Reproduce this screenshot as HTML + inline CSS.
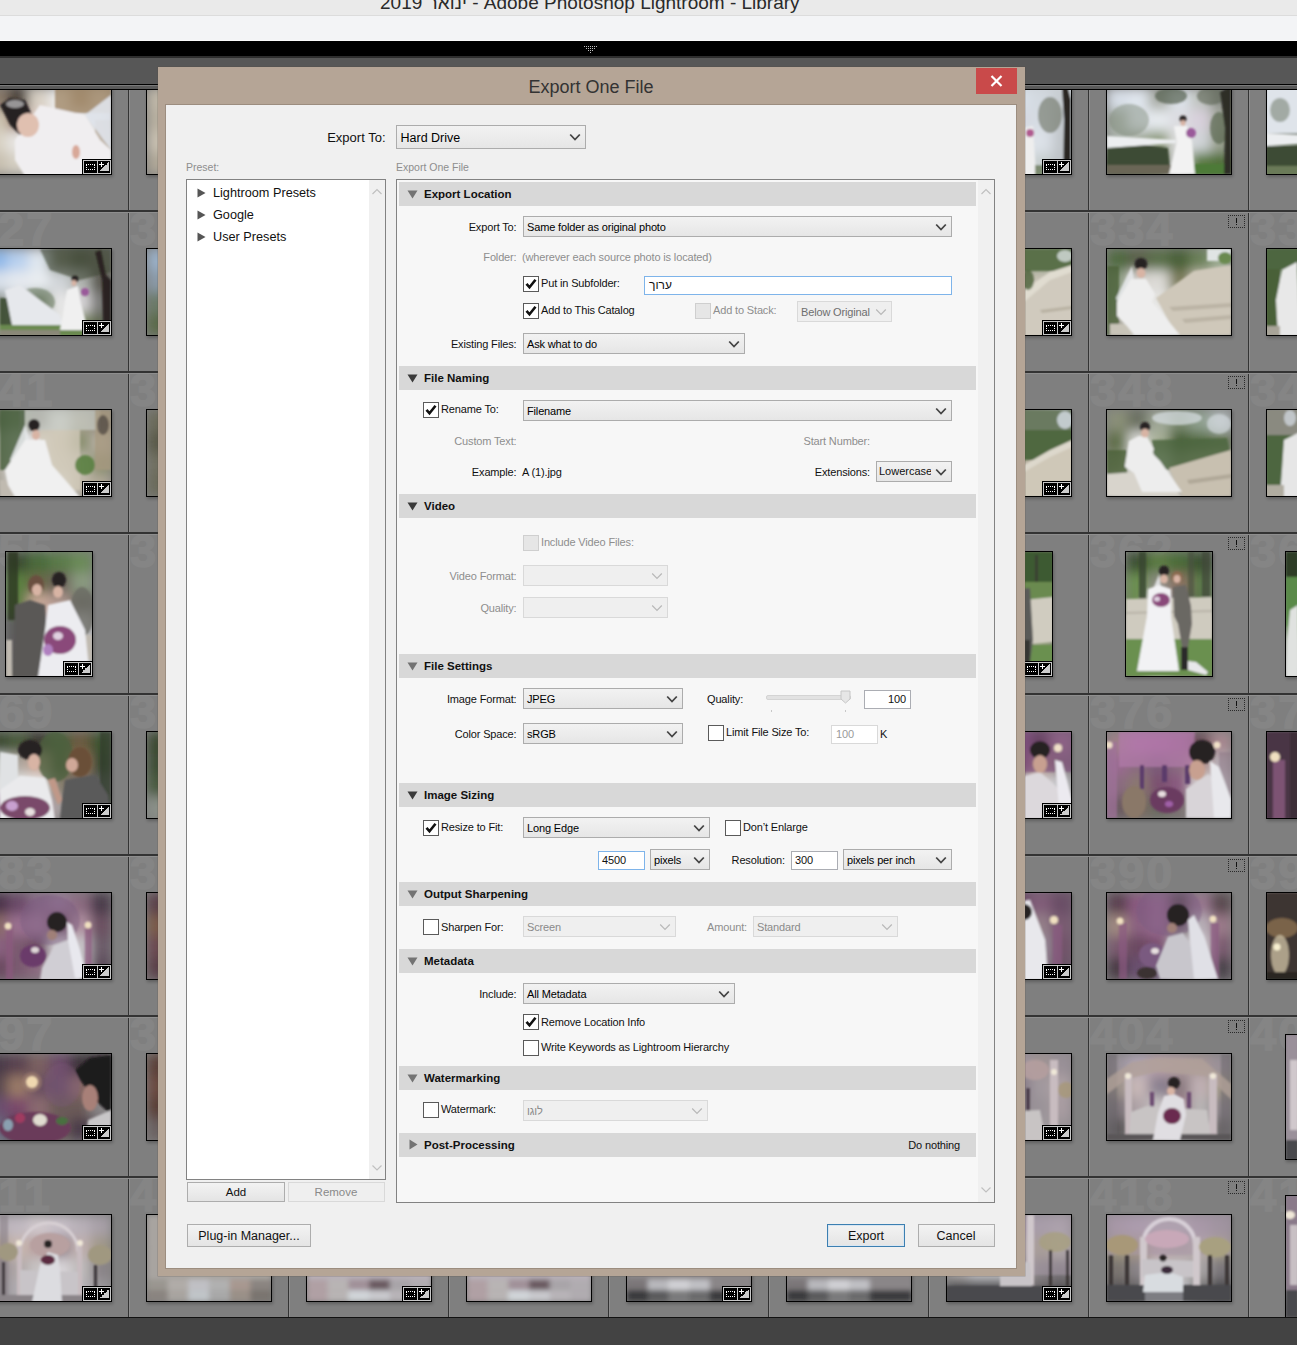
<!DOCTYPE html><html><head><meta charset="utf-8"><style>
*{margin:0;padding:0;box-sizing:border-box}
html,body{width:1297px;height:1345px;overflow:hidden;background:#7f7f7f;font-family:"Liberation Sans", sans-serif}
.a{position:absolute}
.t{white-space:nowrap}
.dd{position:absolute;border:1px solid #acacac;background:linear-gradient(#f2f2f2,#e6e6e6)}
.dd.dis{border-color:#d9d9d9;background:#efefef}
.cb{position:absolute;width:16px;height:16px;border:1px solid #5a5a5a;background:#fff}
.cb.dis{border-color:#cfcfcf;background:#e6e6e6}
.hd{position:absolute;left:399px;width:577px;height:24px;background:#d8d8d8}
.inp{position:absolute;border:1px solid #abadb3;background:#fff}
.btn{position:absolute;border:1px solid #acacac;background:linear-gradient(#f0f0f0,#e5e5e5)}
.ph{position:absolute;border:1px solid #000;overflow:hidden;box-shadow:1px 2px 3px rgba(0,0,0,.25)}
.num{position:absolute;font-weight:700;font-size:47px;line-height:47px;color:#858585;white-space:nowrap;letter-spacing:2px;-webkit-text-stroke:1.5px #858585}
</style></head><body>
<svg width="0" height="0" style="position:absolute"><filter id="pb" x="0" y="0" width="1" height="1"><feGaussianBlur stdDeviation="6" edgeMode="duplicate"/></filter><filter id="pb3" x="0" y="0" width="1" height="1"><feGaussianBlur stdDeviation="2.5" edgeMode="duplicate"/></filter><filter id="pb2" x="-0.1" y="-0.1" width="1.2" height="1.2"><feGaussianBlur stdDeviation="0.9"/></filter></svg>
<div class="num" style="left:-30px;top:44.0px">313</div>
<div class="ph" style="left:-14px;top:87px;width:126px;height:88px"><svg width="124" height="86" style="display:block"><g filter="url(#pb)"><rect x="0.0" y="0.0" width="21.3" height="22.1" fill="#8a7a6a"/><rect x="20.7" y="0.0" width="21.3" height="22.1" fill="#4a4038"/><rect x="41.3" y="0.0" width="21.3" height="22.1" fill="#d8d0c4"/><rect x="62.0" y="0.0" width="21.3" height="22.1" fill="#ececec"/><rect x="82.7" y="0.0" width="21.3" height="22.1" fill="#a89480"/><rect x="103.3" y="0.0" width="21.3" height="22.1" fill="#d8d6d4"/><rect x="0.0" y="21.5" width="21.3" height="22.1" fill="#cfc6b4"/><rect x="20.7" y="21.5" width="21.3" height="22.1" fill="#a08070"/><rect x="41.3" y="21.5" width="21.3" height="22.1" fill="#e0d0c8"/><rect x="62.0" y="21.5" width="21.3" height="22.1" fill="#eeeeee"/><rect x="82.7" y="21.5" width="21.3" height="22.1" fill="#e8e8ea"/><rect x="103.3" y="21.5" width="21.3" height="22.1" fill="#d6d4d0"/><rect x="0.0" y="43.0" width="21.3" height="22.1" fill="#d8d2c4"/><rect x="20.7" y="43.0" width="21.3" height="22.1" fill="#e8e6e4"/><rect x="41.3" y="43.0" width="21.3" height="22.1" fill="#eeeeee"/><rect x="62.0" y="43.0" width="21.3" height="22.1" fill="#f0f0f0"/><rect x="82.7" y="43.0" width="21.3" height="22.1" fill="#eeeeee"/><rect x="103.3" y="43.0" width="21.3" height="22.1" fill="#e6e6e8"/><rect x="0.0" y="64.5" width="21.3" height="22.1" fill="#c8c0b0"/><rect x="20.7" y="64.5" width="21.3" height="22.1" fill="#d6d0c4"/><rect x="41.3" y="64.5" width="21.3" height="22.1" fill="#f0f0f0"/><rect x="62.0" y="64.5" width="21.3" height="22.1" fill="#f2f2f2"/><rect x="82.7" y="64.5" width="21.3" height="22.1" fill="#f0f0f0"/><rect x="103.3" y="64.5" width="21.3" height="22.1" fill="#ececec"/></g><g filter="url(#pb2)" transform="translate(13,-88)"><rect x="55" y="88" width="56" height="25" fill="#a08868" opacity="0.8"/><rect x="95" y="120" width="16" height="30" fill="#a08868" opacity="0.6"/><path d="M85 115 L111 95 L111 150Z" fill="#e0e4ec" opacity="0.9"/><path d="M15 140 L40 105 L85 115 L100 140 L111 150 L111 176 L25 176 L15 160Z" fill="#f0eef0"/><path d="M0 105 L10 98 L25 100 L32 115 L20 135 L10 125Z" fill="#262024"/><ellipse cx="15" cy="104" rx="9" ry="4" fill="#c8c8c8" opacity="0.7"/><ellipse cx="28" cy="125" rx="11" ry="12" fill="#e0c0b0"/><ellipse cx="76" cy="152" rx="4" ry="7" fill="#d8a898"/></g></svg></div>
<div class="a" style="left:82px;top:159px;width:30px;height:16px;background:#000"><div style="position:absolute;left:1px;top:1px;width:28px;height:14px;background:#c8c8c8"></div><div style="position:absolute;left:2px;top:2px;width:13px;height:12px;background:#000"></div><div style="position:absolute;left:16px;top:2px;width:12px;height:12px;background:#000"></div><div style="position:absolute;left:4px;top:5px;width:9px;height:6px;border:1px dotted #fff"></div><div style="position:absolute;left:18px;top:3px;width:9px;height:9px;background:linear-gradient(135deg,transparent 50%,#ccc 50%)"></div><div style="position:absolute;left:17px;top:5px;width:5px;height:1px;background:#fff"></div><div style="position:absolute;left:19px;top:3px;width:1px;height:5px;background:#fff"></div></div>
<div class="num" style="left:130px;top:44.0px">314</div>
<div class="a" style="left:268px;top:54px;width:17px;height:13px;border:1px dotted #2a2a2a"><div style="position:absolute;left:7px;top:2px;width:1px;height:5px;background:#111"></div><div style="position:absolute;left:7px;top:8px;width:1px;height:1px;background:#111"></div></div>
<div class="ph" style="left:146px;top:87px;width:126px;height:88px"><svg width="124" height="86" style="display:block"><g filter="url(#pb)"><rect x="0.0" y="0.0" width="62.6" height="22.1" fill="#c0b8a8"/><rect x="62.0" y="0.0" width="62.6" height="22.1" fill="#c0b8a8"/><rect x="0.0" y="21.5" width="62.6" height="22.1" fill="#b8b0a0"/><rect x="62.0" y="21.5" width="62.6" height="22.1" fill="#b8b0a0"/><rect x="0.0" y="43.0" width="62.6" height="22.1" fill="#c8c0b0"/><rect x="62.0" y="43.0" width="62.6" height="22.1" fill="#c8c0b0"/><rect x="0.0" y="64.5" width="62.6" height="22.1" fill="#b0a898"/><rect x="62.0" y="64.5" width="62.6" height="22.1" fill="#b0a898"/></g></svg></div>
<div class="num" style="left:290px;top:44.0px">315</div>
<div class="num" style="left:450px;top:44.0px">316</div>
<div class="a" style="left:588px;top:54px;width:17px;height:13px;border:1px dotted #2a2a2a"><div style="position:absolute;left:7px;top:2px;width:1px;height:5px;background:#111"></div><div style="position:absolute;left:7px;top:8px;width:1px;height:1px;background:#111"></div></div>
<div class="num" style="left:610px;top:44.0px">317</div>
<div class="num" style="left:770px;top:44.0px">318</div>
<div class="a" style="left:908px;top:54px;width:17px;height:13px;border:1px dotted #2a2a2a"><div style="position:absolute;left:7px;top:2px;width:1px;height:5px;background:#111"></div><div style="position:absolute;left:7px;top:8px;width:1px;height:1px;background:#111"></div></div>
<div class="num" style="left:930px;top:44.0px">319</div>
<div class="ph" style="left:946px;top:87px;width:126px;height:88px"><svg width="124" height="86" style="display:block"><g filter="url(#pb)"><rect x="0.0" y="0.0" width="21.3" height="22.1" fill="#c8d4e4"/><rect x="20.7" y="0.0" width="21.3" height="22.1" fill="#c8d4e4"/><rect x="41.3" y="0.0" width="21.3" height="22.1" fill="#c8d4e4"/><rect x="62.0" y="0.0" width="21.3" height="22.1" fill="#c8d4e4"/><rect x="82.7" y="0.0" width="21.3" height="22.1" fill="#a8b0b8"/><rect x="103.3" y="0.0" width="21.3" height="22.1" fill="#707470"/><rect x="0.0" y="21.5" width="21.3" height="22.1" fill="#b8a8c0"/><rect x="20.7" y="21.5" width="21.3" height="22.1" fill="#b8a8c0"/><rect x="41.3" y="21.5" width="21.3" height="22.1" fill="#b8a8c0"/><rect x="62.0" y="21.5" width="21.3" height="22.1" fill="#b8a8c0"/><rect x="82.7" y="21.5" width="21.3" height="22.1" fill="#b8c0c8"/><rect x="103.3" y="21.5" width="21.3" height="22.1" fill="#5a5a58"/><rect x="0.0" y="43.0" width="21.3" height="22.1" fill="#e0e0e4"/><rect x="20.7" y="43.0" width="21.3" height="22.1" fill="#e0e0e4"/><rect x="41.3" y="43.0" width="21.3" height="22.1" fill="#e0e0e4"/><rect x="62.0" y="43.0" width="21.3" height="22.1" fill="#e0e0e4"/><rect x="82.7" y="43.0" width="21.3" height="22.1" fill="#d8dce4"/><rect x="103.3" y="43.0" width="21.3" height="22.1" fill="#50504a"/><rect x="0.0" y="64.5" width="21.3" height="22.1" fill="#dcdcdc"/><rect x="20.7" y="64.5" width="21.3" height="22.1" fill="#dcdcdc"/><rect x="41.3" y="64.5" width="21.3" height="22.1" fill="#dcdcdc"/><rect x="62.0" y="64.5" width="21.3" height="22.1" fill="#dcdcdc"/><rect x="82.7" y="64.5" width="21.3" height="22.1" fill="#6a7a5a"/><rect x="103.3" y="64.5" width="21.3" height="22.1" fill="#404040"/></g><g filter="url(#pb2)" transform="translate(-947,-88)"><rect x="1000" y="88" width="72" height="88" fill="#dde3ea" opacity="0.8"/><ellipse cx="1050" cy="115" rx="12" ry="18" fill="#6a7060" opacity="0.6"/><path d="M1062 88 L1068 88 L1071 100 L1071 176 L1063 176 L1064 120Z" fill="#2a2824"/><path d="M1024 128 L1033 126 L1036 176 L1024 176Z" fill="#eeeeee"/><ellipse cx="1030" cy="133" rx="4" ry="4" fill="#b05a90"/><rect x="1035" y="165" width="37" height="11" fill="#6a7a5a" opacity="0.8"/></g></svg></div>
<div class="a" style="left:1042px;top:159px;width:30px;height:16px;background:#000"><div style="position:absolute;left:1px;top:1px;width:28px;height:14px;background:#c8c8c8"></div><div style="position:absolute;left:2px;top:2px;width:13px;height:12px;background:#000"></div><div style="position:absolute;left:16px;top:2px;width:12px;height:12px;background:#000"></div><div style="position:absolute;left:4px;top:5px;width:9px;height:6px;border:1px dotted #fff"></div><div style="position:absolute;left:18px;top:3px;width:9px;height:9px;background:linear-gradient(135deg,transparent 50%,#ccc 50%)"></div><div style="position:absolute;left:17px;top:5px;width:5px;height:1px;background:#fff"></div><div style="position:absolute;left:19px;top:3px;width:1px;height:5px;background:#fff"></div></div>
<div class="num" style="left:1090px;top:44.0px">320</div>
<div class="a" style="left:1228px;top:54px;width:17px;height:13px;border:1px dotted #2a2a2a"><div style="position:absolute;left:7px;top:2px;width:1px;height:5px;background:#111"></div><div style="position:absolute;left:7px;top:8px;width:1px;height:1px;background:#111"></div></div>
<div class="ph" style="left:1106px;top:87px;width:126px;height:88px"><svg width="124" height="86" style="display:block"><g filter="url(#pb)"><rect x="0.0" y="0.0" width="21.3" height="22.1" fill="#d8dfe8"/><rect x="20.7" y="0.0" width="21.3" height="22.1" fill="#e0e6ee"/><rect x="41.3" y="0.0" width="21.3" height="22.1" fill="#a8aca4"/><rect x="62.0" y="0.0" width="21.3" height="22.1" fill="#dde3ea"/><rect x="82.7" y="0.0" width="21.3" height="22.1" fill="#c0c4c0"/><rect x="103.3" y="0.0" width="21.3" height="22.1" fill="#8a8e88"/><rect x="0.0" y="21.5" width="21.3" height="22.1" fill="#b0b8b0"/><rect x="20.7" y="21.5" width="21.3" height="22.1" fill="#dfe4ea"/><rect x="41.3" y="21.5" width="21.3" height="22.1" fill="#e6eaee"/><rect x="62.0" y="21.5" width="21.3" height="22.1" fill="#dcdce0"/><rect x="82.7" y="21.5" width="21.3" height="22.1" fill="#d8d0dc"/><rect x="103.3" y="21.5" width="21.3" height="22.1" fill="#a8aca0"/><rect x="0.0" y="43.0" width="21.3" height="22.1" fill="#a8b0a8"/><rect x="20.7" y="43.0" width="21.3" height="22.1" fill="#a0a898"/><rect x="41.3" y="43.0" width="21.3" height="22.1" fill="#8a9878"/><rect x="62.0" y="43.0" width="21.3" height="22.1" fill="#e0e0e0"/><rect x="82.7" y="43.0" width="21.3" height="22.1" fill="#d0d4d8"/><rect x="103.3" y="43.0" width="21.3" height="22.1" fill="#9aa090"/><rect x="0.0" y="64.5" width="21.3" height="22.1" fill="#3e4e34"/><rect x="20.7" y="64.5" width="21.3" height="22.1" fill="#4a5a3a"/><rect x="41.3" y="64.5" width="21.3" height="22.1" fill="#5a6a48"/><rect x="62.0" y="64.5" width="21.3" height="22.1" fill="#d8d8d8"/><rect x="82.7" y="64.5" width="21.3" height="22.1" fill="#5a7a40"/><rect x="103.3" y="64.5" width="21.3" height="22.1" fill="#507038"/></g><g filter="url(#pb2)"><ellipse cx="22" cy="32" rx="20" ry="16" fill="#7a8474" opacity="0.45"/><ellipse cx="64" cy="8" rx="16" ry="8" fill="#55604e" opacity="0.7"/><ellipse cx="104" cy="8" rx="14" ry="9" fill="#5a6454" opacity="0.6"/><ellipse cx="112" cy="40" rx="9" ry="16" fill="#5a6650" opacity="0.7"/><path d="M0 58 L30 56 L61 60 L63 80 L0 80Z" fill="#3e4c34"/><rect x="0" y="77" width="70" height="9" fill="#6a6656"/><rect x="68" y="76" width="56" height="10" fill="#4e7a38"/><path d="M113 4 L120 0 L124 0 L124 86 L117 86 L118 40Z" fill="#2e2e28"/><path d="M0 48 L69 52 L69 55 L0 60Z" fill="#eceef0"/><path d="M67 38 L80 38 L85 54 L88 86 L62 86 L70 54Z" fill="#f2f2f2"/><ellipse cx="76" cy="31" rx="3.5" ry="3.5" fill="#262024"/><ellipse cx="76" cy="35" rx="2.5" ry="3" fill="#d8b4a4"/><ellipse cx="84" cy="45" rx="5" ry="5" fill="#9a5a9a"/></g></svg></div>
<div class="num" style="left:1250px;top:44.0px">321</div>
<div class="ph" style="left:1266px;top:87px;width:126px;height:88px"><svg width="124" height="86" style="display:block"><g filter="url(#pb)"><rect x="0.0" y="0.0" width="62.6" height="22.1" fill="#b8c0c0"/><rect x="62.0" y="0.0" width="62.6" height="22.1" fill="#c8d0d8"/><rect x="0.0" y="21.5" width="62.6" height="22.1" fill="#d8dce0"/><rect x="62.0" y="21.5" width="62.6" height="22.1" fill="#d0d4d8"/><rect x="0.0" y="43.0" width="62.6" height="22.1" fill="#4a5a40"/><rect x="62.0" y="43.0" width="62.6" height="22.1" fill="#506040"/><rect x="0.0" y="64.5" width="62.6" height="22.1" fill="#6a7a58"/><rect x="62.0" y="64.5" width="62.6" height="22.1" fill="#708060"/></g><g filter="url(#pb2)" transform="translate(-1267,-88)"><rect x="1266" y="88" width="40" height="45" fill="#dfe4ea"/><ellipse cx="1280" cy="110" rx="10" ry="12" fill="#7a8474" opacity="0.6"/><path d="M1266 133 L1300 135 L1300 144 L1266 146Z" fill="#eceef0"/><rect x="1266" y="146" width="40" height="20" fill="#3e4c34"/><rect x="1266" y="166" width="40" height="10" fill="#6a7a58"/></g></svg></div>
<div class="a" style="left:1362px;top:159px;width:30px;height:16px;background:#000"><div style="position:absolute;left:1px;top:1px;width:28px;height:14px;background:#c8c8c8"></div><div style="position:absolute;left:2px;top:2px;width:13px;height:12px;background:#000"></div><div style="position:absolute;left:16px;top:2px;width:12px;height:12px;background:#000"></div><div style="position:absolute;left:4px;top:5px;width:9px;height:6px;border:1px dotted #fff"></div><div style="position:absolute;left:18px;top:3px;width:9px;height:9px;background:linear-gradient(135deg,transparent 50%,#ccc 50%)"></div><div style="position:absolute;left:17px;top:5px;width:5px;height:1px;background:#fff"></div><div style="position:absolute;left:19px;top:3px;width:1px;height:5px;background:#fff"></div></div>
<div class="num" style="left:-30px;top:205.0px">327</div>
<div class="ph" style="left:-14px;top:248px;width:126px;height:88px"><svg width="124" height="86" style="display:block"><g filter="url(#pb)"><rect x="0.0" y="0.0" width="21.3" height="22.1" fill="#8fb8e8"/><rect x="20.7" y="0.0" width="21.3" height="22.1" fill="#b8d0ee"/><rect x="41.3" y="0.0" width="21.3" height="22.1" fill="#dfe6ee"/><rect x="62.0" y="0.0" width="21.3" height="22.1" fill="#7a8070"/><rect x="82.7" y="0.0" width="21.3" height="22.1" fill="#5a6050"/><rect x="103.3" y="0.0" width="21.3" height="22.1" fill="#6a6a60"/><rect x="0.0" y="21.5" width="21.3" height="22.1" fill="#d8e0ea"/><rect x="20.7" y="21.5" width="21.3" height="22.1" fill="#e4e8ee"/><rect x="41.3" y="21.5" width="21.3" height="22.1" fill="#e8ecf0"/><rect x="62.0" y="21.5" width="21.3" height="22.1" fill="#d0d4d8"/><rect x="82.7" y="21.5" width="21.3" height="22.1" fill="#b0b4b0"/><rect x="103.3" y="21.5" width="21.3" height="22.1" fill="#5a5850"/><rect x="0.0" y="43.0" width="21.3" height="22.1" fill="#8a9088"/><rect x="20.7" y="43.0" width="21.3" height="22.1" fill="#c8ccd0"/><rect x="41.3" y="43.0" width="21.3" height="22.1" fill="#708068"/><rect x="62.0" y="43.0" width="21.3" height="22.1" fill="#e6e6e6"/><rect x="82.7" y="43.0" width="21.3" height="22.1" fill="#d8d6d8"/><rect x="103.3" y="43.0" width="21.3" height="22.1" fill="#7a7a78"/><rect x="0.0" y="64.5" width="21.3" height="22.1" fill="#8a9a78"/><rect x="20.7" y="64.5" width="21.3" height="22.1" fill="#b8bcb8"/><rect x="41.3" y="64.5" width="21.3" height="22.1" fill="#7a8a68"/><rect x="62.0" y="64.5" width="21.3" height="22.1" fill="#e8e8e8"/><rect x="82.7" y="64.5" width="21.3" height="22.1" fill="#7a8a60"/><rect x="103.3" y="64.5" width="21.3" height="22.1" fill="#5e6650"/></g><g filter="url(#pb2)" transform="translate(13,-249)"><path d="M40 249 L111 249 L111 272 L80 280 L50 270Z" fill="#3a4430" opacity="0.6"/><path d="M95 252 L101 250 L106 275 L111 280 L111 330 L103 330 L102 280Z" fill="#2a2420"/><rect x="0" y="298" width="12" height="30" fill="#3a4a30" opacity="0.9"/><ellipse cx="35" cy="302" rx="20" ry="14" fill="#6a7a60" opacity="0.6"/><rect x="0" y="325" width="111" height="11" fill="#6a8a50"/><rect x="0" y="330" width="60" height="6" fill="#8a8878"/><path d="M5 290 L20 285 L60 315 L62 325 L12 325Z" fill="#e6e8ec"/><path d="M67 290 L78 286 L80 300 L88 330 L60 330 L65 300Z" fill="#f0f0f0"/><ellipse cx="75" cy="279" rx="3.5" ry="3.5" fill="#262024"/><ellipse cx="74" cy="283" rx="2.5" ry="3" fill="#d8b4a4"/><ellipse cx="85" cy="292" rx="4" ry="4" fill="#9a5a9a"/></g></svg></div>
<div class="a" style="left:82px;top:320px;width:30px;height:16px;background:#000"><div style="position:absolute;left:1px;top:1px;width:28px;height:14px;background:#c8c8c8"></div><div style="position:absolute;left:2px;top:2px;width:13px;height:12px;background:#000"></div><div style="position:absolute;left:16px;top:2px;width:12px;height:12px;background:#000"></div><div style="position:absolute;left:4px;top:5px;width:9px;height:6px;border:1px dotted #fff"></div><div style="position:absolute;left:18px;top:3px;width:9px;height:9px;background:linear-gradient(135deg,transparent 50%,#ccc 50%)"></div><div style="position:absolute;left:17px;top:5px;width:5px;height:1px;background:#fff"></div><div style="position:absolute;left:19px;top:3px;width:1px;height:5px;background:#fff"></div></div>
<div class="num" style="left:130px;top:205.0px">328</div>
<div class="a" style="left:268px;top:215px;width:17px;height:13px;border:1px dotted #2a2a2a"><div style="position:absolute;left:7px;top:2px;width:1px;height:5px;background:#111"></div><div style="position:absolute;left:7px;top:8px;width:1px;height:1px;background:#111"></div></div>
<div class="ph" style="left:146px;top:248px;width:126px;height:88px"><svg width="124" height="86" style="display:block"><g filter="url(#pb)"><rect x="0.0" y="0.0" width="62.6" height="22.1" fill="#9ab0c8"/><rect x="62.0" y="0.0" width="62.6" height="22.1" fill="#9ab0c8"/><rect x="0.0" y="21.5" width="62.6" height="22.1" fill="#8a9aa8"/><rect x="62.0" y="21.5" width="62.6" height="22.1" fill="#8a9aa8"/><rect x="0.0" y="43.0" width="62.6" height="22.1" fill="#6a7a68"/><rect x="62.0" y="43.0" width="62.6" height="22.1" fill="#6a7a68"/><rect x="0.0" y="64.5" width="62.6" height="22.1" fill="#5a6a48"/><rect x="62.0" y="64.5" width="62.6" height="22.1" fill="#5a6a48"/></g></svg></div>
<div class="num" style="left:290px;top:205.0px">329</div>
<div class="num" style="left:450px;top:205.0px">330</div>
<div class="a" style="left:588px;top:215px;width:17px;height:13px;border:1px dotted #2a2a2a"><div style="position:absolute;left:7px;top:2px;width:1px;height:5px;background:#111"></div><div style="position:absolute;left:7px;top:8px;width:1px;height:1px;background:#111"></div></div>
<div class="num" style="left:610px;top:205.0px">331</div>
<div class="num" style="left:770px;top:205.0px">332</div>
<div class="a" style="left:908px;top:215px;width:17px;height:13px;border:1px dotted #2a2a2a"><div style="position:absolute;left:7px;top:2px;width:1px;height:5px;background:#111"></div><div style="position:absolute;left:7px;top:8px;width:1px;height:1px;background:#111"></div></div>
<div class="num" style="left:930px;top:205.0px">333</div>
<div class="ph" style="left:946px;top:248px;width:126px;height:88px"><svg width="124" height="86" style="display:block"><g filter="url(#pb)"><rect x="0.0" y="0.0" width="21.3" height="22.1" fill="#6a8060"/><rect x="20.7" y="0.0" width="21.3" height="22.1" fill="#6a8060"/><rect x="41.3" y="0.0" width="21.3" height="22.1" fill="#6a8060"/><rect x="62.0" y="0.0" width="21.3" height="22.1" fill="#6a8060"/><rect x="82.7" y="0.0" width="21.3" height="22.1" fill="#8a9a80"/><rect x="103.3" y="0.0" width="21.3" height="22.1" fill="#7a9068"/><rect x="0.0" y="21.5" width="21.3" height="22.1" fill="#c0bab0"/><rect x="20.7" y="21.5" width="21.3" height="22.1" fill="#c0bab0"/><rect x="41.3" y="21.5" width="21.3" height="22.1" fill="#c0bab0"/><rect x="62.0" y="21.5" width="21.3" height="22.1" fill="#c0bab0"/><rect x="82.7" y="21.5" width="21.3" height="22.1" fill="#c8c2b6"/><rect x="103.3" y="21.5" width="21.3" height="22.1" fill="#cfcabf"/><rect x="0.0" y="43.0" width="21.3" height="22.1" fill="#c0bab0"/><rect x="20.7" y="43.0" width="21.3" height="22.1" fill="#c0bab0"/><rect x="41.3" y="43.0" width="21.3" height="22.1" fill="#c0bab0"/><rect x="62.0" y="43.0" width="21.3" height="22.1" fill="#c0bab0"/><rect x="82.7" y="43.0" width="21.3" height="22.1" fill="#d0cabe"/><rect x="103.3" y="43.0" width="21.3" height="22.1" fill="#ccc6b8"/><rect x="0.0" y="64.5" width="21.3" height="22.1" fill="#c8c4b8"/><rect x="20.7" y="64.5" width="21.3" height="22.1" fill="#c8c4b8"/><rect x="41.3" y="64.5" width="21.3" height="22.1" fill="#c8c4b8"/><rect x="62.0" y="64.5" width="21.3" height="22.1" fill="#c8c4b8"/><rect x="82.7" y="64.5" width="21.3" height="22.1" fill="#c8c4b8"/><rect x="103.3" y="64.5" width="21.3" height="22.1" fill="#c0bcb0"/></g><g filter="url(#pb2)" transform="translate(-947,-249)"><rect x="1000" y="249" width="72" height="22" fill="#5a7048"/><ellipse cx="1065" cy="256" rx="8" ry="6" fill="#d8e0e0" opacity="0.8"/><path d="M1024 300 L1050 280 L1072 270 L1072 336 L1024 336Z" fill="#d0cabe"/><path d="M1024 290 L1050 272 L1072 265 L1072 272 L1050 280 L1024 302Z" fill="#e0dcd0"/><path d="M1040 310 L1072 306 L1072 309 L1042 313Z" fill="#a8a090" opacity="0.6"/><ellipse cx="1028" cy="280" rx="6" ry="10" fill="#4a6038" opacity="0.8"/></g></svg></div>
<div class="a" style="left:1042px;top:320px;width:30px;height:16px;background:#000"><div style="position:absolute;left:1px;top:1px;width:28px;height:14px;background:#c8c8c8"></div><div style="position:absolute;left:2px;top:2px;width:13px;height:12px;background:#000"></div><div style="position:absolute;left:16px;top:2px;width:12px;height:12px;background:#000"></div><div style="position:absolute;left:4px;top:5px;width:9px;height:6px;border:1px dotted #fff"></div><div style="position:absolute;left:18px;top:3px;width:9px;height:9px;background:linear-gradient(135deg,transparent 50%,#ccc 50%)"></div><div style="position:absolute;left:17px;top:5px;width:5px;height:1px;background:#fff"></div><div style="position:absolute;left:19px;top:3px;width:1px;height:5px;background:#fff"></div></div>
<div class="num" style="left:1090px;top:205.0px">334</div>
<div class="a" style="left:1228px;top:215px;width:17px;height:13px;border:1px dotted #2a2a2a"><div style="position:absolute;left:7px;top:2px;width:1px;height:5px;background:#111"></div><div style="position:absolute;left:7px;top:8px;width:1px;height:1px;background:#111"></div></div>
<div class="ph" style="left:1106px;top:248px;width:126px;height:88px"><svg width="124" height="86" style="display:block"><g filter="url(#pb)"><rect x="0.0" y="0.0" width="21.3" height="22.1" fill="#506a40"/><rect x="20.7" y="0.0" width="21.3" height="22.1" fill="#5a6048"/><rect x="41.3" y="0.0" width="21.3" height="22.1" fill="#5a7048"/><rect x="62.0" y="0.0" width="21.3" height="22.1" fill="#4a6038"/><rect x="82.7" y="0.0" width="21.3" height="22.1" fill="#6a8058"/><rect x="103.3" y="0.0" width="21.3" height="22.1" fill="#9aaa90"/><rect x="0.0" y="21.5" width="21.3" height="22.1" fill="#8a9a80"/><rect x="20.7" y="21.5" width="21.3" height="22.1" fill="#d8d4d0"/><rect x="41.3" y="21.5" width="21.3" height="22.1" fill="#dcdad6"/><rect x="62.0" y="21.5" width="21.3" height="22.1" fill="#7a7a58"/><rect x="82.7" y="21.5" width="21.3" height="22.1" fill="#c8c2b4"/><rect x="103.3" y="21.5" width="21.3" height="22.1" fill="#ccc6ba"/><rect x="0.0" y="43.0" width="21.3" height="22.1" fill="#90a088"/><rect x="20.7" y="43.0" width="21.3" height="22.1" fill="#e8e8e6"/><rect x="41.3" y="43.0" width="21.3" height="22.1" fill="#e6e6e4"/><rect x="62.0" y="43.0" width="21.3" height="22.1" fill="#c8c2b4"/><rect x="82.7" y="43.0" width="21.3" height="22.1" fill="#c0bcb0"/><rect x="103.3" y="43.0" width="21.3" height="22.1" fill="#c8c4b8"/><rect x="0.0" y="64.5" width="21.3" height="22.1" fill="#a8a498"/><rect x="20.7" y="64.5" width="21.3" height="22.1" fill="#e8e8e8"/><rect x="41.3" y="64.5" width="21.3" height="22.1" fill="#ececec"/><rect x="62.0" y="64.5" width="21.3" height="22.1" fill="#c8c4b8"/><rect x="82.7" y="64.5" width="21.3" height="22.1" fill="#c8c4ba"/><rect x="103.3" y="64.5" width="21.3" height="22.1" fill="#ccc8bc"/></g><g filter="url(#pb2)"><rect x="100" y="0" width="24" height="12" fill="#e0e4e4"/><ellipse cx="118" cy="9" rx="7" ry="6" fill="#6a8a50"/><path d="M49 49 L87 22 L124 16 L124 86 L70 86Z" fill="#cfc8ba"/><path d="M62 58 L124 54 L124 58 L66 62Z" fill="#a8a090" opacity="0.5"/><path d="M75 70 L124 66 L124 70 L78 74Z" fill="#a8a090" opacity="0.5"/><rect x="0" y="17" width="12" height="69" fill="#4a6038" opacity="0.8"/><rect x="3" y="75" width="24" height="11" fill="#c8c4b8"/><path d="M9 49 L25 17 L27 29 L17 67Z" fill="#e6e8ea" opacity="0.9"/><path d="M10 53 L24 30 L39 30 L48 45 L45 53 L53 62 L73 86 L27 86 L20 77 L10 67Z" fill="#eeeeee"/><ellipse cx="34" cy="15" rx="6.5" ry="6" fill="#262024"/><ellipse cx="34" cy="24" rx="4.5" ry="5" fill="#d8b4a4"/></g></svg></div>
<div class="num" style="left:1250px;top:205.0px">335</div>
<div class="ph" style="left:1266px;top:248px;width:126px;height:88px"><svg width="124" height="86" style="display:block"><g filter="url(#pb)"><rect x="0.0" y="0.0" width="62.6" height="22.1" fill="#4a6038"/><rect x="62.0" y="0.0" width="62.6" height="22.1" fill="#5a7048"/><rect x="0.0" y="21.5" width="62.6" height="22.1" fill="#6a8060"/><rect x="62.0" y="21.5" width="62.6" height="22.1" fill="#c0c4c0"/><rect x="0.0" y="43.0" width="62.6" height="22.1" fill="#7a8a68"/><rect x="62.0" y="43.0" width="62.6" height="22.1" fill="#d8d8d8"/><rect x="0.0" y="64.5" width="62.6" height="22.1" fill="#8a8a78"/><rect x="62.0" y="64.5" width="62.6" height="22.1" fill="#d0d0d0"/></g><g filter="url(#pb2)" transform="translate(-1267,-249)"><rect x="1266" y="249" width="40" height="20" fill="#4e6640"/><rect x="1266" y="269" width="14" height="67" fill="#4a6038"/><path d="M1282 270 L1297 262 L1300 336 L1278 336 L1276 300Z" fill="#e8e8e8"/><rect x="1266" y="326" width="14" height="10" fill="#a8a498"/></g></svg></div>
<div class="a" style="left:1362px;top:320px;width:30px;height:16px;background:#000"><div style="position:absolute;left:1px;top:1px;width:28px;height:14px;background:#c8c8c8"></div><div style="position:absolute;left:2px;top:2px;width:13px;height:12px;background:#000"></div><div style="position:absolute;left:16px;top:2px;width:12px;height:12px;background:#000"></div><div style="position:absolute;left:4px;top:5px;width:9px;height:6px;border:1px dotted #fff"></div><div style="position:absolute;left:18px;top:3px;width:9px;height:9px;background:linear-gradient(135deg,transparent 50%,#ccc 50%)"></div><div style="position:absolute;left:17px;top:5px;width:5px;height:1px;background:#fff"></div><div style="position:absolute;left:19px;top:3px;width:1px;height:5px;background:#fff"></div></div>
<div class="num" style="left:-30px;top:366.0px">341</div>
<div class="ph" style="left:-14px;top:409px;width:126px;height:88px"><svg width="124" height="86" style="display:block"><g filter="url(#pb)"><rect x="0.0" y="0.0" width="21.3" height="22.1" fill="#5a6a50"/><rect x="20.7" y="0.0" width="21.3" height="22.1" fill="#8a9a80"/><rect x="41.3" y="0.0" width="21.3" height="22.1" fill="#8a8480"/><rect x="62.0" y="0.0" width="21.3" height="22.1" fill="#d0d0cc"/><rect x="82.7" y="0.0" width="21.3" height="22.1" fill="#a8a090"/><rect x="103.3" y="0.0" width="21.3" height="22.1" fill="#8a8478"/><rect x="0.0" y="21.5" width="21.3" height="22.1" fill="#a0a898"/><rect x="20.7" y="21.5" width="21.3" height="22.1" fill="#e0dede"/><rect x="41.3" y="21.5" width="21.3" height="22.1" fill="#e8e6e6"/><rect x="62.0" y="21.5" width="21.3" height="22.1" fill="#cfc8b8"/><rect x="82.7" y="21.5" width="21.3" height="22.1" fill="#8a9070"/><rect x="103.3" y="21.5" width="21.3" height="22.1" fill="#b8b0a4"/><rect x="0.0" y="43.0" width="21.3" height="22.1" fill="#b0aca0"/><rect x="20.7" y="43.0" width="21.3" height="22.1" fill="#e6e4e4"/><rect x="41.3" y="43.0" width="21.3" height="22.1" fill="#ececec"/><rect x="62.0" y="43.0" width="21.3" height="22.1" fill="#d6d0c4"/><rect x="82.7" y="43.0" width="21.3" height="22.1" fill="#c0baae"/><rect x="103.3" y="43.0" width="21.3" height="22.1" fill="#8a9070"/><rect x="0.0" y="64.5" width="21.3" height="22.1" fill="#a8a498"/><rect x="20.7" y="64.5" width="21.3" height="22.1" fill="#dcdad8"/><rect x="41.3" y="64.5" width="21.3" height="22.1" fill="#f0f0f0"/><rect x="62.0" y="64.5" width="21.3" height="22.1" fill="#f2f2f2"/><rect x="82.7" y="64.5" width="21.3" height="22.1" fill="#c0b8a8"/><rect x="103.3" y="64.5" width="21.3" height="22.1" fill="#b0a898"/></g><g filter="url(#pb2)" transform="translate(13,-410)"><rect x="20" y="410" width="80" height="20" fill="#c8ccc4" opacity="0.7"/><rect x="0" y="410" width="25" height="60" fill="#4a6040" opacity="0.85"/><rect x="40" y="430" width="40" height="60" fill="#cfc8b8" opacity="0.8"/><rect x="95" y="410" width="16" height="60" fill="#a89880" opacity="0.8"/><ellipse cx="103" cy="425" rx="6" ry="10" fill="#3a3430" opacity="0.6"/><ellipse cx="85" cy="465" rx="10" ry="10" fill="#5a8040" opacity="0.9"/><rect x="0" y="480" width="20" height="17" fill="#c0bab0"/><path d="M10 460 L25 425 L30 440 L20 470Z" fill="#e6e8ea" opacity="0.9"/><path d="M5 470 L25 440 L45 440 L52 465 L80 497 L15 497 L8 485Z" fill="#f0f0f0"/><ellipse cx="34" cy="425" rx="6" ry="6" fill="#262024"/><ellipse cx="36" cy="435" rx="4" ry="5" fill="#d8b4a4"/></g></svg></div>
<div class="a" style="left:82px;top:481px;width:30px;height:16px;background:#000"><div style="position:absolute;left:1px;top:1px;width:28px;height:14px;background:#c8c8c8"></div><div style="position:absolute;left:2px;top:2px;width:13px;height:12px;background:#000"></div><div style="position:absolute;left:16px;top:2px;width:12px;height:12px;background:#000"></div><div style="position:absolute;left:4px;top:5px;width:9px;height:6px;border:1px dotted #fff"></div><div style="position:absolute;left:18px;top:3px;width:9px;height:9px;background:linear-gradient(135deg,transparent 50%,#ccc 50%)"></div><div style="position:absolute;left:17px;top:5px;width:5px;height:1px;background:#fff"></div><div style="position:absolute;left:19px;top:3px;width:1px;height:5px;background:#fff"></div></div>
<div class="num" style="left:130px;top:366.0px">342</div>
<div class="a" style="left:268px;top:376px;width:17px;height:13px;border:1px dotted #2a2a2a"><div style="position:absolute;left:7px;top:2px;width:1px;height:5px;background:#111"></div><div style="position:absolute;left:7px;top:8px;width:1px;height:1px;background:#111"></div></div>
<div class="ph" style="left:146px;top:409px;width:126px;height:88px"><svg width="124" height="86" style="display:block"><g filter="url(#pb)"><rect x="0.0" y="0.0" width="62.6" height="22.1" fill="#6a6a5a"/><rect x="62.0" y="0.0" width="62.6" height="22.1" fill="#6a6a5a"/><rect x="0.0" y="21.5" width="62.6" height="22.1" fill="#5a5a48"/><rect x="62.0" y="21.5" width="62.6" height="22.1" fill="#5a5a48"/><rect x="0.0" y="43.0" width="62.6" height="22.1" fill="#707060"/><rect x="62.0" y="43.0" width="62.6" height="22.1" fill="#707060"/><rect x="0.0" y="64.5" width="62.6" height="22.1" fill="#6a6a5a"/><rect x="62.0" y="64.5" width="62.6" height="22.1" fill="#6a6a5a"/></g></svg></div>
<div class="num" style="left:290px;top:366.0px">343</div>
<div class="num" style="left:450px;top:366.0px">344</div>
<div class="a" style="left:588px;top:376px;width:17px;height:13px;border:1px dotted #2a2a2a"><div style="position:absolute;left:7px;top:2px;width:1px;height:5px;background:#111"></div><div style="position:absolute;left:7px;top:8px;width:1px;height:1px;background:#111"></div></div>
<div class="num" style="left:610px;top:366.0px">345</div>
<div class="num" style="left:770px;top:366.0px">346</div>
<div class="a" style="left:908px;top:376px;width:17px;height:13px;border:1px dotted #2a2a2a"><div style="position:absolute;left:7px;top:2px;width:1px;height:5px;background:#111"></div><div style="position:absolute;left:7px;top:8px;width:1px;height:1px;background:#111"></div></div>
<div class="num" style="left:930px;top:366.0px">347</div>
<div class="ph" style="left:946px;top:409px;width:126px;height:88px"><svg width="124" height="86" style="display:block"><g filter="url(#pb)"><rect x="0.0" y="0.0" width="21.3" height="22.1" fill="#6a7a60"/><rect x="20.7" y="0.0" width="21.3" height="22.1" fill="#6a7a60"/><rect x="41.3" y="0.0" width="21.3" height="22.1" fill="#6a7a60"/><rect x="62.0" y="0.0" width="21.3" height="22.1" fill="#6a7a60"/><rect x="82.7" y="0.0" width="21.3" height="22.1" fill="#8a9a88"/><rect x="103.3" y="0.0" width="21.3" height="22.1" fill="#a8b4b0"/><rect x="0.0" y="21.5" width="21.3" height="22.1" fill="#4a6040"/><rect x="20.7" y="21.5" width="21.3" height="22.1" fill="#4a6040"/><rect x="41.3" y="21.5" width="21.3" height="22.1" fill="#4a6040"/><rect x="62.0" y="21.5" width="21.3" height="22.1" fill="#4a6040"/><rect x="82.7" y="21.5" width="21.3" height="22.1" fill="#5a7048"/><rect x="103.3" y="21.5" width="21.3" height="22.1" fill="#8a9078"/><rect x="0.0" y="43.0" width="21.3" height="22.1" fill="#b8b0a0"/><rect x="20.7" y="43.0" width="21.3" height="22.1" fill="#b8b0a0"/><rect x="41.3" y="43.0" width="21.3" height="22.1" fill="#b8b0a0"/><rect x="62.0" y="43.0" width="21.3" height="22.1" fill="#b8b0a0"/><rect x="82.7" y="43.0" width="21.3" height="22.1" fill="#c0b8a8"/><rect x="103.3" y="43.0" width="21.3" height="22.1" fill="#c8c2b4"/><rect x="0.0" y="64.5" width="21.3" height="22.1" fill="#c0b8a8"/><rect x="20.7" y="64.5" width="21.3" height="22.1" fill="#c0b8a8"/><rect x="41.3" y="64.5" width="21.3" height="22.1" fill="#c0b8a8"/><rect x="62.0" y="64.5" width="21.3" height="22.1" fill="#c0b8a8"/><rect x="82.7" y="64.5" width="21.3" height="22.1" fill="#c0b8a8"/><rect x="103.3" y="64.5" width="21.3" height="22.1" fill="#b8b0a0"/></g><g filter="url(#pb2)" transform="translate(-947,-410)"><rect x="1000" y="410" width="72" height="20" fill="#6a7a60"/><ellipse cx="1065" cy="420" rx="8" ry="9" fill="#d8e0e8" opacity="0.8"/><rect x="1000" y="430" width="72" height="30" fill="#506840"/><path d="M1024 470 L1050 455 L1072 445 L1072 497 L1024 497Z" fill="#cfc8b8"/><path d="M1024 465 L1050 450 L1072 440 L1072 447 L1050 457 L1024 472Z" fill="#ddd8cc"/></g></svg></div>
<div class="a" style="left:1042px;top:481px;width:30px;height:16px;background:#000"><div style="position:absolute;left:1px;top:1px;width:28px;height:14px;background:#c8c8c8"></div><div style="position:absolute;left:2px;top:2px;width:13px;height:12px;background:#000"></div><div style="position:absolute;left:16px;top:2px;width:12px;height:12px;background:#000"></div><div style="position:absolute;left:4px;top:5px;width:9px;height:6px;border:1px dotted #fff"></div><div style="position:absolute;left:18px;top:3px;width:9px;height:9px;background:linear-gradient(135deg,transparent 50%,#ccc 50%)"></div><div style="position:absolute;left:17px;top:5px;width:5px;height:1px;background:#fff"></div><div style="position:absolute;left:19px;top:3px;width:1px;height:5px;background:#fff"></div></div>
<div class="num" style="left:1090px;top:366.0px">348</div>
<div class="a" style="left:1228px;top:376px;width:17px;height:13px;border:1px dotted #2a2a2a"><div style="position:absolute;left:7px;top:2px;width:1px;height:5px;background:#111"></div><div style="position:absolute;left:7px;top:8px;width:1px;height:1px;background:#111"></div></div>
<div class="ph" style="left:1106px;top:409px;width:126px;height:88px"><svg width="124" height="86" style="display:block"><g filter="url(#pb)"><rect x="0.0" y="0.0" width="21.3" height="22.1" fill="#8a9078"/><rect x="20.7" y="0.0" width="21.3" height="22.1" fill="#6a7060"/><rect x="41.3" y="0.0" width="21.3" height="22.1" fill="#a0a898"/><rect x="62.0" y="0.0" width="21.3" height="22.1" fill="#7a8a70"/><rect x="82.7" y="0.0" width="21.3" height="22.1" fill="#90a090"/><rect x="103.3" y="0.0" width="21.3" height="22.1" fill="#b0b8b8"/><rect x="0.0" y="21.5" width="21.3" height="22.1" fill="#607048"/><rect x="20.7" y="21.5" width="21.3" height="22.1" fill="#d8d8d4"/><rect x="41.3" y="21.5" width="21.3" height="22.1" fill="#a8b098"/><rect x="62.0" y="21.5" width="21.3" height="22.1" fill="#4a6038"/><rect x="82.7" y="21.5" width="21.3" height="22.1" fill="#5a7048"/><rect x="103.3" y="21.5" width="21.3" height="22.1" fill="#6a7a58"/><rect x="0.0" y="43.0" width="21.3" height="22.1" fill="#8a9078"/><rect x="20.7" y="43.0" width="21.3" height="22.1" fill="#e0e0de"/><rect x="41.3" y="43.0" width="21.3" height="22.1" fill="#e8e8e8"/><rect x="62.0" y="43.0" width="21.3" height="22.1" fill="#9a9a88"/><rect x="82.7" y="43.0" width="21.3" height="22.1" fill="#b8b0a0"/><rect x="103.3" y="43.0" width="21.3" height="22.1" fill="#c8c0b0"/><rect x="0.0" y="64.5" width="21.3" height="22.1" fill="#d0ccc4"/><rect x="20.7" y="64.5" width="21.3" height="22.1" fill="#d8d4cc"/><rect x="41.3" y="64.5" width="21.3" height="22.1" fill="#ececec"/><rect x="62.0" y="64.5" width="21.3" height="22.1" fill="#c8c4b8"/><rect x="82.7" y="64.5" width="21.3" height="22.1" fill="#c0b8a8"/><rect x="103.3" y="64.5" width="21.3" height="22.1" fill="#c8c0b0"/></g><g filter="url(#pb2)"><ellipse cx="70" cy="8" rx="25" ry="7" fill="#d8e0e4" opacity="0.7"/><ellipse cx="112" cy="14" rx="12" ry="10" fill="#d8e0e4" opacity="0.6"/><path d="M45 30 L120 28 L124 45 L62 60 L48 58Z" fill="#4e6640" opacity="0.85"/><rect x="0" y="40" width="20" height="26" fill="#4a6038" opacity="0.8"/><path d="M62 58 L110 44 L124 40 L124 86 L75 86Z" fill="#c8c0b0"/><path d="M80 70 L124 64 L124 68 L82 74Z" fill="#a09888" opacity="0.6"/><path d="M0 64 L30 62 L55 70 L75 86 L0 86Z" fill="#d8d4cc"/><path d="M18 55 L22 31 L32 26 L40 27 L47 39 L45 43 L53 51 L75 82 L35 82 L27 63 L18 57Z" fill="#ededed"/><ellipse cx="38" cy="17" rx="5" ry="5" fill="#262024"/><ellipse cx="38" cy="23" rx="4" ry="4.5" fill="#d8b4a4"/></g></svg></div>
<div class="num" style="left:1250px;top:366.0px">349</div>
<div class="ph" style="left:1266px;top:409px;width:126px;height:88px"><svg width="124" height="86" style="display:block"><g filter="url(#pb)"><rect x="0.0" y="0.0" width="62.6" height="22.1" fill="#8a8a80"/><rect x="62.0" y="0.0" width="62.6" height="22.1" fill="#a0a8a0"/><rect x="0.0" y="21.5" width="62.6" height="22.1" fill="#6a7a58"/><rect x="62.0" y="21.5" width="62.6" height="22.1" fill="#c8c8c4"/><rect x="0.0" y="43.0" width="62.6" height="22.1" fill="#4a6038"/><rect x="62.0" y="43.0" width="62.6" height="22.1" fill="#d8d8d8"/><rect x="0.0" y="64.5" width="62.6" height="22.1" fill="#a8a498"/><rect x="62.0" y="64.5" width="62.6" height="22.1" fill="#c8c8c4"/></g><g filter="url(#pb2)" transform="translate(-1267,-410)"><rect x="1266" y="410" width="40" height="25" fill="#8a8a80"/><ellipse cx="1290" cy="418" rx="6" ry="8" fill="#d8e0e8" opacity="0.7"/><rect x="1266" y="435" width="40" height="62" fill="#4e6640"/><path d="M1284 440 L1300 432 L1300 497 L1280 497 L1282 470Z" fill="#e6e6e6"/><rect x="1266" y="485" width="18" height="12" fill="#b0aca0"/></g></svg></div>
<div class="a" style="left:1362px;top:481px;width:30px;height:16px;background:#000"><div style="position:absolute;left:1px;top:1px;width:28px;height:14px;background:#c8c8c8"></div><div style="position:absolute;left:2px;top:2px;width:13px;height:12px;background:#000"></div><div style="position:absolute;left:16px;top:2px;width:12px;height:12px;background:#000"></div><div style="position:absolute;left:4px;top:5px;width:9px;height:6px;border:1px dotted #fff"></div><div style="position:absolute;left:18px;top:3px;width:9px;height:9px;background:linear-gradient(135deg,transparent 50%,#ccc 50%)"></div><div style="position:absolute;left:17px;top:5px;width:5px;height:1px;background:#fff"></div><div style="position:absolute;left:19px;top:3px;width:1px;height:5px;background:#fff"></div></div>
<div class="num" style="left:-30px;top:527.0px">355</div>
<div class="ph" style="left:5px;top:551px;width:88px;height:126px"><svg width="86" height="124" style="display:block"><g filter="url(#pb)"><rect x="0.0" y="0.0" width="22.1" height="21.3" fill="#3a4a30"/><rect x="21.5" y="0.0" width="22.1" height="21.3" fill="#4a6a3a"/><rect x="43.0" y="0.0" width="22.1" height="21.3" fill="#5a7a48"/><rect x="64.5" y="0.0" width="22.1" height="21.3" fill="#6a8a58"/><rect x="0.0" y="20.7" width="22.1" height="21.3" fill="#5a8040"/><rect x="21.5" y="20.7" width="22.1" height="21.3" fill="#6a6a48"/><rect x="43.0" y="20.7" width="22.1" height="21.3" fill="#6a6058"/><rect x="64.5" y="20.7" width="22.1" height="21.3" fill="#8a9a80"/><rect x="0.0" y="41.3" width="22.1" height="21.3" fill="#5a7a40"/><rect x="21.5" y="41.3" width="22.1" height="21.3" fill="#c8a898"/><rect x="43.0" y="41.3" width="22.1" height="21.3" fill="#b09890"/><rect x="64.5" y="41.3" width="22.1" height="21.3" fill="#6a6a60"/><rect x="0.0" y="62.0" width="22.1" height="21.3" fill="#5a5a58"/><rect x="21.5" y="62.0" width="22.1" height="21.3" fill="#6a6866"/><rect x="43.0" y="62.0" width="22.1" height="21.3" fill="#c8b8c8"/><rect x="64.5" y="62.0" width="22.1" height="21.3" fill="#d8d8dc"/><rect x="0.0" y="82.7" width="22.1" height="21.3" fill="#5a5858"/><rect x="21.5" y="82.7" width="22.1" height="21.3" fill="#8a6080"/><rect x="43.0" y="82.7" width="22.1" height="21.3" fill="#a07aa0"/><rect x="64.5" y="82.7" width="22.1" height="21.3" fill="#c8c8c8"/><rect x="0.0" y="103.3" width="22.1" height="21.3" fill="#585858"/><rect x="21.5" y="103.3" width="22.1" height="21.3" fill="#7a6a7a"/><rect x="43.0" y="103.3" width="22.1" height="21.3" fill="#e0e0e0"/><rect x="64.5" y="103.3" width="22.1" height="21.3" fill="#d8d8d8"/></g><g filter="url(#pb2)" transform="translate(-6,-552)"><rect x="8" y="552" width="10" height="68" fill="#2a3a20" opacity="0.8"/><ellipse cx="82" cy="612" rx="12" ry="25" fill="#6a6a64" opacity="0.8"/><rect x="6" y="640" width="6" height="37" fill="#c0bab0"/><rect x="82" y="635" width="10" height="25" fill="#c0bab0"/><path d="M15 605 L30 600 L45 605 L47 640 L42 677 L12 677 L15 640Z" fill="#5a5856"/><ellipse cx="36" cy="585" rx="8" ry="10" fill="#6a5040"/><ellipse cx="37" cy="590" rx="5" ry="6" fill="#d8b4a4"/><path d="M48 605 L70 600 L85 630 L90 677 L38 677 L45 630Z" fill="#ececf0"/><ellipse cx="59" cy="580" rx="7" ry="8" fill="#262024"/><ellipse cx="58" cy="592" rx="5" ry="6" fill="#d8b4a4"/><ellipse cx="60" cy="640" rx="16" ry="14" fill="#8a4a7a"/><ellipse cx="58" cy="636" rx="5" ry="4" fill="#e0d0e0"/><ellipse cx="48" cy="650" rx="5" ry="6" fill="#b080c0"/></g></svg></div>
<div class="a" style="left:63px;top:661px;width:30px;height:16px;background:#000"><div style="position:absolute;left:1px;top:1px;width:28px;height:14px;background:#c8c8c8"></div><div style="position:absolute;left:2px;top:2px;width:13px;height:12px;background:#000"></div><div style="position:absolute;left:16px;top:2px;width:12px;height:12px;background:#000"></div><div style="position:absolute;left:4px;top:5px;width:9px;height:6px;border:1px dotted #fff"></div><div style="position:absolute;left:18px;top:3px;width:9px;height:9px;background:linear-gradient(135deg,transparent 50%,#ccc 50%)"></div><div style="position:absolute;left:17px;top:5px;width:5px;height:1px;background:#fff"></div><div style="position:absolute;left:19px;top:3px;width:1px;height:5px;background:#fff"></div></div>
<div class="num" style="left:130px;top:527.0px">356</div>
<div class="a" style="left:268px;top:537px;width:17px;height:13px;border:1px dotted #2a2a2a"><div style="position:absolute;left:7px;top:2px;width:1px;height:5px;background:#111"></div><div style="position:absolute;left:7px;top:8px;width:1px;height:1px;background:#111"></div></div>
<div class="num" style="left:290px;top:527.0px">357</div>
<div class="num" style="left:450px;top:527.0px">358</div>
<div class="a" style="left:588px;top:537px;width:17px;height:13px;border:1px dotted #2a2a2a"><div style="position:absolute;left:7px;top:2px;width:1px;height:5px;background:#111"></div><div style="position:absolute;left:7px;top:8px;width:1px;height:1px;background:#111"></div></div>
<div class="num" style="left:610px;top:527.0px">359</div>
<div class="num" style="left:770px;top:527.0px">360</div>
<div class="a" style="left:908px;top:537px;width:17px;height:13px;border:1px dotted #2a2a2a"><div style="position:absolute;left:7px;top:2px;width:1px;height:5px;background:#111"></div><div style="position:absolute;left:7px;top:8px;width:1px;height:1px;background:#111"></div></div>
<div class="num" style="left:930px;top:527.0px">361</div>
<div class="ph" style="left:965px;top:551px;width:88px;height:126px"><svg width="86" height="124" style="display:block"><g filter="url(#pb)"><rect x="0.0" y="0.0" width="22.1" height="21.3" fill="#4a6a38"/><rect x="21.5" y="0.0" width="22.1" height="21.3" fill="#4a6a38"/><rect x="43.0" y="0.0" width="22.1" height="21.3" fill="#4a6a38"/><rect x="64.5" y="0.0" width="22.1" height="21.3" fill="#5a6a48"/><rect x="0.0" y="20.7" width="22.1" height="21.3" fill="#6a8a50"/><rect x="21.5" y="20.7" width="22.1" height="21.3" fill="#6a8a50"/><rect x="43.0" y="20.7" width="22.1" height="21.3" fill="#6a8a50"/><rect x="64.5" y="20.7" width="22.1" height="21.3" fill="#6a7a58"/><rect x="0.0" y="41.3" width="22.1" height="21.3" fill="#707068"/><rect x="21.5" y="41.3" width="22.1" height="21.3" fill="#707068"/><rect x="43.0" y="41.3" width="22.1" height="21.3" fill="#707068"/><rect x="64.5" y="41.3" width="22.1" height="21.3" fill="#8a9070"/><rect x="0.0" y="62.0" width="22.1" height="21.3" fill="#606060"/><rect x="21.5" y="62.0" width="22.1" height="21.3" fill="#606060"/><rect x="43.0" y="62.0" width="22.1" height="21.3" fill="#606060"/><rect x="64.5" y="62.0" width="22.1" height="21.3" fill="#c0bab0"/><rect x="0.0" y="82.7" width="22.1" height="21.3" fill="#404040"/><rect x="21.5" y="82.7" width="22.1" height="21.3" fill="#404040"/><rect x="43.0" y="82.7" width="22.1" height="21.3" fill="#404040"/><rect x="64.5" y="82.7" width="22.1" height="21.3" fill="#8a9a70"/><rect x="0.0" y="103.3" width="22.1" height="21.3" fill="#6a8a48"/><rect x="21.5" y="103.3" width="22.1" height="21.3" fill="#6a8a48"/><rect x="43.0" y="103.3" width="22.1" height="21.3" fill="#6a8a48"/><rect x="64.5" y="103.3" width="22.1" height="21.3" fill="#6a8a48"/></g><g filter="url(#pb2)" transform="translate(-966,-552)"><rect x="966" y="552" width="87" height="30" fill="#3e5a30"/><rect x="1035" y="555" width="3" height="45" fill="#3a4030"/><rect x="966" y="582" width="87" height="20" fill="#6a8a50"/><path d="M1024 600 L1053 597 L1053 642 L1024 645Z" fill="#d0ccc0"/><rect x="966" y="645" width="87" height="32" fill="#6a9050"/><path d="M1000 590 L1030 588 L1033 640 L1028 677 L1000 677Z" fill="#5a5a58"/><rect x="1024" y="640" width="6" height="37" fill="#2a2a2a" opacity="0.8"/></g></svg></div>
<div class="a" style="left:1023px;top:661px;width:30px;height:16px;background:#000"><div style="position:absolute;left:1px;top:1px;width:28px;height:14px;background:#c8c8c8"></div><div style="position:absolute;left:2px;top:2px;width:13px;height:12px;background:#000"></div><div style="position:absolute;left:16px;top:2px;width:12px;height:12px;background:#000"></div><div style="position:absolute;left:4px;top:5px;width:9px;height:6px;border:1px dotted #fff"></div><div style="position:absolute;left:18px;top:3px;width:9px;height:9px;background:linear-gradient(135deg,transparent 50%,#ccc 50%)"></div><div style="position:absolute;left:17px;top:5px;width:5px;height:1px;background:#fff"></div><div style="position:absolute;left:19px;top:3px;width:1px;height:5px;background:#fff"></div></div>
<div class="num" style="left:1090px;top:527.0px">362</div>
<div class="a" style="left:1228px;top:537px;width:17px;height:13px;border:1px dotted #2a2a2a"><div style="position:absolute;left:7px;top:2px;width:1px;height:5px;background:#111"></div><div style="position:absolute;left:7px;top:8px;width:1px;height:1px;background:#111"></div></div>
<div class="ph" style="left:1125px;top:551px;width:88px;height:126px"><svg width="86" height="124" style="display:block"><g filter="url(#pb)"><rect x="0.0" y="0.0" width="22.1" height="21.3" fill="#3a5030"/><rect x="21.5" y="0.0" width="22.1" height="21.3" fill="#5a7a40"/><rect x="43.0" y="0.0" width="22.1" height="21.3" fill="#4a6a38"/><rect x="64.5" y="0.0" width="22.1" height="21.3" fill="#3a5030"/><rect x="0.0" y="20.7" width="22.1" height="21.3" fill="#6a9050"/><rect x="21.5" y="20.7" width="22.1" height="21.3" fill="#8a8a80"/><rect x="43.0" y="20.7" width="22.1" height="21.3" fill="#8a7060"/><rect x="64.5" y="20.7" width="22.1" height="21.3" fill="#5a7a48"/><rect x="0.0" y="41.3" width="22.1" height="21.3" fill="#6a8a50"/><rect x="21.5" y="41.3" width="22.1" height="21.3" fill="#c8b8c8"/><rect x="43.0" y="41.3" width="22.1" height="21.3" fill="#707068"/><rect x="64.5" y="41.3" width="22.1" height="21.3" fill="#5a7048"/><rect x="0.0" y="62.0" width="22.1" height="21.3" fill="#c0bab0"/><rect x="21.5" y="62.0" width="22.1" height="21.3" fill="#e8e8e8"/><rect x="43.0" y="62.0" width="22.1" height="21.3" fill="#6a6a68"/><rect x="64.5" y="62.0" width="22.1" height="21.3" fill="#c0baae"/><rect x="0.0" y="82.7" width="22.1" height="21.3" fill="#8aa060"/><rect x="21.5" y="82.7" width="22.1" height="21.3" fill="#ececec"/><rect x="43.0" y="82.7" width="22.1" height="21.3" fill="#7a7870"/><rect x="64.5" y="82.7" width="22.1" height="21.3" fill="#7a9a58"/><rect x="0.0" y="103.3" width="22.1" height="21.3" fill="#6a8a48"/><rect x="21.5" y="103.3" width="22.1" height="21.3" fill="#e6e6e6"/><rect x="43.0" y="103.3" width="22.1" height="21.3" fill="#8a8a80"/><rect x="64.5" y="103.3" width="22.1" height="21.3" fill="#6a8a48"/></g><g filter="url(#pb2)"><rect x="13" y="0" width="7" height="47" fill="#3a4430" opacity="0.8"/><rect x="62" y="0" width="6" height="48" fill="#4a5040" opacity="0.6"/><rect x="76" y="0" width="8" height="50" fill="#3e4636" opacity="0.7"/><path d="M0 47 L86 45 L86 87 L0 87Z" fill="#cfcbbf"/><path d="M0 60 L86 58 L86 60 L0 62Z" fill="#a8a498" opacity="0.6"/><rect x="0" y="87" width="86" height="37" fill="#6a9050"/><path d="M24 45 L33 22 L35 35 L28 58Z" fill="#e4e6e8" opacity="0.9"/><path d="M22 37 L33 33 L45 37 L45 64 L53 119 L11 119 L21 64Z" fill="#f2f2f4"/><ellipse cx="38" cy="19" rx="5" ry="5.5" fill="#262024"/><ellipse cx="38" cy="27" rx="4" ry="4.5" fill="#d8b4a4"/><ellipse cx="35" cy="48" rx="9" ry="7" fill="#8a4a7a"/><ellipse cx="31" cy="47" rx="3" ry="2.5" fill="#e0d0e0"/><path d="M47 35 L60 33 L65 54 L66 72 L62 95 L56 95 L52 72 L48 64Z" fill="#6a6864"/><ellipse cx="51" cy="25" rx="5.5" ry="6" fill="#8a6a50"/><ellipse cx="51" cy="27" rx="3.5" ry="4" fill="#d8b4a4"/><rect x="55" y="95" width="7" height="23" fill="#2a2a2a"/><path d="M62 109 L70 110 L82 120 L80 123 L62 118Z" fill="#e8e8ea"/></g></svg></div>
<div class="num" style="left:1250px;top:527.0px">363</div>
<div class="ph" style="left:1285px;top:551px;width:88px;height:126px"><svg width="86" height="124" style="display:block"><g filter="url(#pb)"><rect x="0.0" y="0.0" width="86.6" height="21.3" fill="#3a4a30"/><rect x="0.0" y="20.7" width="86.6" height="21.3" fill="#4a7a38"/><rect x="0.0" y="41.3" width="86.6" height="21.3" fill="#5a8a48"/><rect x="0.0" y="62.0" width="86.6" height="21.3" fill="#6a9a50"/><rect x="0.0" y="82.7" width="86.6" height="21.3" fill="#c8d0c0"/><rect x="0.0" y="103.3" width="86.6" height="21.3" fill="#d8d8d8"/></g><g filter="url(#pb2)" transform="translate(-1286,-552)"><rect x="1286" y="552" width="12" height="25" fill="#2e3e26"/><rect x="1286" y="577" width="12" height="50" fill="#5a8a48"/><path d="M1290 610 L1298 605 L1298 677 L1286 677 L1287 640Z" fill="#e0e2e0"/></g></svg></div>
<div class="a" style="left:1343px;top:661px;width:30px;height:16px;background:#000"><div style="position:absolute;left:1px;top:1px;width:28px;height:14px;background:#c8c8c8"></div><div style="position:absolute;left:2px;top:2px;width:13px;height:12px;background:#000"></div><div style="position:absolute;left:16px;top:2px;width:12px;height:12px;background:#000"></div><div style="position:absolute;left:4px;top:5px;width:9px;height:6px;border:1px dotted #fff"></div><div style="position:absolute;left:18px;top:3px;width:9px;height:9px;background:linear-gradient(135deg,transparent 50%,#ccc 50%)"></div><div style="position:absolute;left:17px;top:5px;width:5px;height:1px;background:#fff"></div><div style="position:absolute;left:19px;top:3px;width:1px;height:5px;background:#fff"></div></div>
<div class="num" style="left:-30px;top:688.0px">369</div>
<div class="ph" style="left:-14px;top:731px;width:126px;height:88px"><svg width="124" height="86" style="display:block"><g filter="url(#pb)"><rect x="0.0" y="0.0" width="21.3" height="22.1" fill="#3a4a30"/><rect x="20.7" y="0.0" width="21.3" height="22.1" fill="#4a5a3a"/><rect x="41.3" y="0.0" width="21.3" height="22.1" fill="#3a3830"/><rect x="62.0" y="0.0" width="21.3" height="22.1" fill="#4a5e3a"/><rect x="82.7" y="0.0" width="21.3" height="22.1" fill="#6a5a40"/><rect x="103.3" y="0.0" width="21.3" height="22.1" fill="#3e5230"/><rect x="0.0" y="21.5" width="21.3" height="22.1" fill="#c8ccc8"/><rect x="20.7" y="21.5" width="21.3" height="22.1" fill="#b0a8a0"/><rect x="41.3" y="21.5" width="21.3" height="22.1" fill="#c8a898"/><rect x="62.0" y="21.5" width="21.3" height="22.1" fill="#4a5a38"/><rect x="82.7" y="21.5" width="21.3" height="22.1" fill="#a08068"/><rect x="103.3" y="21.5" width="21.3" height="22.1" fill="#3a4a30"/><rect x="0.0" y="43.0" width="21.3" height="22.1" fill="#e0e0e0"/><rect x="20.7" y="43.0" width="21.3" height="22.1" fill="#ececec"/><rect x="41.3" y="43.0" width="21.3" height="22.1" fill="#e8e8e8"/><rect x="62.0" y="43.0" width="21.3" height="22.1" fill="#8a8070"/><rect x="82.7" y="43.0" width="21.3" height="22.1" fill="#5a5a5a"/><rect x="103.3" y="43.0" width="21.3" height="22.1" fill="#606060"/><rect x="0.0" y="64.5" width="21.3" height="22.1" fill="#b090b0"/><rect x="20.7" y="64.5" width="21.3" height="22.1" fill="#904a80"/><rect x="41.3" y="64.5" width="21.3" height="22.1" fill="#c0a0b0"/><rect x="62.0" y="64.5" width="21.3" height="22.1" fill="#a8a0a0"/><rect x="82.7" y="64.5" width="21.3" height="22.1" fill="#585858"/><rect x="103.3" y="64.5" width="21.3" height="22.1" fill="#5a5a5a"/></g><g filter="url(#pb2)" transform="translate(13,-732)"><ellipse cx="55" cy="757" rx="18" ry="25" fill="#4e6040" opacity="0.8"/><rect x="100" y="732" width="11" height="87" fill="#2e3a28" opacity="0.7"/><path d="M0 752 L18 755 L18 790 L0 795Z" fill="#e0e2e4"/><path d="M0 790 L20 776 L45 778 L52 800 L55 819 L0 819Z" fill="#eaeaec"/><ellipse cx="30" cy="750" rx="12" ry="10" fill="#262024"/><ellipse cx="34" cy="762" rx="6" ry="8" fill="#d8b4a4"/><path d="M48 780 L55 778 L62 800 L58 805Z" fill="#c09888"/><path d="M65 780 L95 775 L108 795 L111 819 L60 819 L62 800Z" fill="#5a5a5a"/><ellipse cx="80" cy="762" rx="12" ry="15" fill="#6a5038"/><ellipse cx="72" cy="765" rx="6" ry="7" fill="#d0a898"/><ellipse cx="25" cy="808" rx="25" ry="12" fill="#7a4a6a"/><ellipse cx="12" cy="806" rx="6" ry="5" fill="#c8a0d0"/><ellipse cx="30" cy="812" rx="5" ry="4" fill="#e8e0e0"/></g></svg></div>
<div class="a" style="left:82px;top:803px;width:30px;height:16px;background:#000"><div style="position:absolute;left:1px;top:1px;width:28px;height:14px;background:#c8c8c8"></div><div style="position:absolute;left:2px;top:2px;width:13px;height:12px;background:#000"></div><div style="position:absolute;left:16px;top:2px;width:12px;height:12px;background:#000"></div><div style="position:absolute;left:4px;top:5px;width:9px;height:6px;border:1px dotted #fff"></div><div style="position:absolute;left:18px;top:3px;width:9px;height:9px;background:linear-gradient(135deg,transparent 50%,#ccc 50%)"></div><div style="position:absolute;left:17px;top:5px;width:5px;height:1px;background:#fff"></div><div style="position:absolute;left:19px;top:3px;width:1px;height:5px;background:#fff"></div></div>
<div class="num" style="left:130px;top:688.0px">370</div>
<div class="a" style="left:268px;top:698px;width:17px;height:13px;border:1px dotted #2a2a2a"><div style="position:absolute;left:7px;top:2px;width:1px;height:5px;background:#111"></div><div style="position:absolute;left:7px;top:8px;width:1px;height:1px;background:#111"></div></div>
<div class="ph" style="left:146px;top:731px;width:126px;height:88px"><svg width="124" height="86" style="display:block"><g filter="url(#pb)"><rect x="0.0" y="0.0" width="62.6" height="22.1" fill="#3a4a30"/><rect x="62.0" y="0.0" width="62.6" height="22.1" fill="#3a4a30"/><rect x="0.0" y="21.5" width="62.6" height="22.1" fill="#3e4e34"/><rect x="62.0" y="21.5" width="62.6" height="22.1" fill="#3e4e34"/><rect x="0.0" y="43.0" width="62.6" height="22.1" fill="#4a5a40"/><rect x="62.0" y="43.0" width="62.6" height="22.1" fill="#4a5a40"/><rect x="0.0" y="64.5" width="62.6" height="22.1" fill="#8a9088"/><rect x="62.0" y="64.5" width="62.6" height="22.1" fill="#8a9088"/></g></svg></div>
<div class="num" style="left:290px;top:688.0px">371</div>
<div class="num" style="left:450px;top:688.0px">372</div>
<div class="a" style="left:588px;top:698px;width:17px;height:13px;border:1px dotted #2a2a2a"><div style="position:absolute;left:7px;top:2px;width:1px;height:5px;background:#111"></div><div style="position:absolute;left:7px;top:8px;width:1px;height:1px;background:#111"></div></div>
<div class="num" style="left:610px;top:688.0px">373</div>
<div class="num" style="left:770px;top:688.0px">374</div>
<div class="a" style="left:908px;top:698px;width:17px;height:13px;border:1px dotted #2a2a2a"><div style="position:absolute;left:7px;top:2px;width:1px;height:5px;background:#111"></div><div style="position:absolute;left:7px;top:8px;width:1px;height:1px;background:#111"></div></div>
<div class="num" style="left:930px;top:688.0px">375</div>
<div class="ph" style="left:946px;top:731px;width:126px;height:88px"><svg width="124" height="86" style="display:block"><g filter="url(#pb)"><rect x="0.0" y="0.0" width="21.3" height="22.1" fill="#8a5a88"/><rect x="20.7" y="0.0" width="21.3" height="22.1" fill="#8a5a88"/><rect x="41.3" y="0.0" width="21.3" height="22.1" fill="#8a5a88"/><rect x="62.0" y="0.0" width="21.3" height="22.1" fill="#8a5a88"/><rect x="82.7" y="0.0" width="21.3" height="22.1" fill="#4a3a40"/><rect x="103.3" y="0.0" width="21.3" height="22.1" fill="#a88898"/><rect x="0.0" y="21.5" width="21.3" height="22.1" fill="#7a4a78"/><rect x="20.7" y="21.5" width="21.3" height="22.1" fill="#7a4a78"/><rect x="41.3" y="21.5" width="21.3" height="22.1" fill="#7a4a78"/><rect x="62.0" y="21.5" width="21.3" height="22.1" fill="#7a4a78"/><rect x="82.7" y="21.5" width="21.3" height="22.1" fill="#b09088"/><rect x="103.3" y="21.5" width="21.3" height="22.1" fill="#8a7a80"/><rect x="0.0" y="43.0" width="21.3" height="22.1" fill="#c8c4c4"/><rect x="20.7" y="43.0" width="21.3" height="22.1" fill="#c8c4c4"/><rect x="41.3" y="43.0" width="21.3" height="22.1" fill="#c8c4c4"/><rect x="62.0" y="43.0" width="21.3" height="22.1" fill="#c8c4c4"/><rect x="82.7" y="43.0" width="21.3" height="22.1" fill="#d8d4d4"/><rect x="103.3" y="43.0" width="21.3" height="22.1" fill="#c8c8cc"/><rect x="0.0" y="64.5" width="21.3" height="22.1" fill="#6a5a50"/><rect x="20.7" y="64.5" width="21.3" height="22.1" fill="#6a5a50"/><rect x="41.3" y="64.5" width="21.3" height="22.1" fill="#6a5a50"/><rect x="62.0" y="64.5" width="21.3" height="22.1" fill="#6a5a50"/><rect x="82.7" y="64.5" width="21.3" height="22.1" fill="#a8a4a4"/><rect x="103.3" y="64.5" width="21.3" height="22.1" fill="#c0bcbc"/></g><g filter="url(#pb2)" transform="translate(-947,-732)"><rect x="946" y="732" width="126" height="40" fill="#7a4a78" opacity="0.6"/><ellipse cx="1058" cy="748" rx="4" ry="4" fill="#f0e0c8"/><path d="M1010 780 L1040 772 L1060 790 L1064 819 L1010 819Z" fill="#dcd8dc"/><path d="M1055 760 L1062 762 L1072 800 L1072 819 L1060 819Z" fill="#eceaf0"/><ellipse cx="1040" cy="750" rx="10" ry="9" fill="#262024"/><ellipse cx="1040" cy="764" rx="7" ry="9" fill="#c8a090"/></g></svg></div>
<div class="a" style="left:1042px;top:803px;width:30px;height:16px;background:#000"><div style="position:absolute;left:1px;top:1px;width:28px;height:14px;background:#c8c8c8"></div><div style="position:absolute;left:2px;top:2px;width:13px;height:12px;background:#000"></div><div style="position:absolute;left:16px;top:2px;width:12px;height:12px;background:#000"></div><div style="position:absolute;left:4px;top:5px;width:9px;height:6px;border:1px dotted #fff"></div><div style="position:absolute;left:18px;top:3px;width:9px;height:9px;background:linear-gradient(135deg,transparent 50%,#ccc 50%)"></div><div style="position:absolute;left:17px;top:5px;width:5px;height:1px;background:#fff"></div><div style="position:absolute;left:19px;top:3px;width:1px;height:5px;background:#fff"></div></div>
<div class="num" style="left:1090px;top:688.0px">376</div>
<div class="a" style="left:1228px;top:698px;width:17px;height:13px;border:1px dotted #2a2a2a"><div style="position:absolute;left:7px;top:2px;width:1px;height:5px;background:#111"></div><div style="position:absolute;left:7px;top:8px;width:1px;height:1px;background:#111"></div></div>
<div class="ph" style="left:1106px;top:731px;width:126px;height:88px"><svg width="124" height="86" style="display:block"><g filter="url(#pb)"><rect x="0.0" y="0.0" width="21.3" height="22.1" fill="#a08088"/><rect x="20.7" y="0.0" width="21.3" height="22.1" fill="#b070a8"/><rect x="41.3" y="0.0" width="21.3" height="22.1" fill="#a868a0"/><rect x="62.0" y="0.0" width="21.3" height="22.1" fill="#9a6090"/><rect x="82.7" y="0.0" width="21.3" height="22.1" fill="#6a5058"/><rect x="103.3" y="0.0" width="21.3" height="22.1" fill="#a88890"/><rect x="0.0" y="21.5" width="21.3" height="22.1" fill="#9a6a90"/><rect x="20.7" y="21.5" width="21.3" height="22.1" fill="#8a6a80"/><rect x="41.3" y="21.5" width="21.3" height="22.1" fill="#7a5a78"/><rect x="62.0" y="21.5" width="21.3" height="22.1" fill="#8a6a80"/><rect x="82.7" y="21.5" width="21.3" height="22.1" fill="#b09088"/><rect x="103.3" y="21.5" width="21.3" height="22.1" fill="#b8b0b8"/><rect x="0.0" y="43.0" width="21.3" height="22.1" fill="#8a6a80"/><rect x="20.7" y="43.0" width="21.3" height="22.1" fill="#8a7870"/><rect x="41.3" y="43.0" width="21.3" height="22.1" fill="#7a5070"/><rect x="62.0" y="43.0" width="21.3" height="22.1" fill="#8a5a80"/><rect x="82.7" y="43.0" width="21.3" height="22.1" fill="#d8d4d4"/><rect x="103.3" y="43.0" width="21.3" height="22.1" fill="#d0d0d4"/><rect x="0.0" y="64.5" width="21.3" height="22.1" fill="#6a5a60"/><rect x="20.7" y="64.5" width="21.3" height="22.1" fill="#7a6a60"/><rect x="41.3" y="64.5" width="21.3" height="22.1" fill="#6a6a60"/><rect x="62.0" y="64.5" width="21.3" height="22.1" fill="#7a7070"/><rect x="82.7" y="64.5" width="21.3" height="22.1" fill="#a8a4a4"/><rect x="103.3" y="64.5" width="21.3" height="22.1" fill="#c8c8cc"/></g><g filter="url(#pb2)"><path d="M12 0 L88 0 L85 35 L12 35Z" fill="#b07aa8" opacity="0.75"/><rect x="0" y="10" width="10" height="76" fill="#a0709a" opacity="0.7"/><rect x="112" y="20" width="12" height="60" fill="#8a7080" opacity="0.5"/><ellipse cx="2" cy="13" rx="3.5" ry="3.5" fill="#f0e0c8"/><ellipse cx="110" cy="13" rx="3.5" ry="3.5" fill="#f0e0c8"/><rect x="33" y="33" width="4" height="24" fill="#5a3a6a"/><rect x="55" y="33" width="5" height="17" fill="#5a3a6a"/><rect x="78" y="33" width="5" height="19" fill="#5a3a6a"/><ellipse cx="27" cy="70" rx="12" ry="16" fill="#8a7868"/><path d="M79 57 L102 42 L108 51 L107 86 L79 86Z" fill="#d8d4d8"/><path d="M103 29 L112 35 L124 67 L124 86 L107 86Z" fill="#e8e8ec"/><ellipse cx="60" cy="68" rx="17" ry="13" fill="#6a3a60"/><ellipse cx="55" cy="62" rx="4" ry="3" fill="#e8e0e0"/><ellipse cx="62" cy="72" rx="4" ry="3" fill="#a060a8"/><ellipse cx="95" cy="20" rx="13" ry="12" fill="#262024"/><ellipse cx="90" cy="38" rx="8" ry="10" fill="#c8a090"/></g></svg></div>
<div class="num" style="left:1250px;top:688.0px">377</div>
<div class="ph" style="left:1266px;top:731px;width:126px;height:88px"><svg width="124" height="86" style="display:block"><g filter="url(#pb)"><rect x="0.0" y="0.0" width="62.6" height="22.1" fill="#4a3a48"/><rect x="62.0" y="0.0" width="62.6" height="22.1" fill="#8a7068"/><rect x="0.0" y="21.5" width="62.6" height="22.1" fill="#7a5a60"/><rect x="62.0" y="21.5" width="62.6" height="22.1" fill="#8a5a80"/><rect x="0.0" y="43.0" width="62.6" height="22.1" fill="#8a6080"/><rect x="62.0" y="43.0" width="62.6" height="22.1" fill="#7a5a70"/><rect x="0.0" y="64.5" width="62.6" height="22.1" fill="#5a4a50"/><rect x="62.0" y="64.5" width="62.6" height="22.1" fill="#6a5a58"/></g><g filter="url(#pb2)" transform="translate(-1267,-732)"><rect x="1266" y="732" width="40" height="87" fill="#4a3444"/><rect x="1273" y="760" width="12" height="59" fill="#8a5a80" opacity="0.8"/><ellipse cx="1275" cy="757" rx="5" ry="5" fill="#f0e0c0"/><rect x="1290" y="732" width="10" height="87" fill="#3a2e36" opacity="0.8"/></g></svg></div>
<div class="a" style="left:1362px;top:803px;width:30px;height:16px;background:#000"><div style="position:absolute;left:1px;top:1px;width:28px;height:14px;background:#c8c8c8"></div><div style="position:absolute;left:2px;top:2px;width:13px;height:12px;background:#000"></div><div style="position:absolute;left:16px;top:2px;width:12px;height:12px;background:#000"></div><div style="position:absolute;left:4px;top:5px;width:9px;height:6px;border:1px dotted #fff"></div><div style="position:absolute;left:18px;top:3px;width:9px;height:9px;background:linear-gradient(135deg,transparent 50%,#ccc 50%)"></div><div style="position:absolute;left:17px;top:5px;width:5px;height:1px;background:#fff"></div><div style="position:absolute;left:19px;top:3px;width:1px;height:5px;background:#fff"></div></div>
<div class="num" style="left:-30px;top:849.0px">383</div>
<div class="ph" style="left:-14px;top:892px;width:126px;height:88px"><svg width="124" height="86" style="display:block"><g filter="url(#pb)"><rect x="0.0" y="0.0" width="21.3" height="22.1" fill="#4a3048"/><rect x="20.7" y="0.0" width="21.3" height="22.1" fill="#6a4a68"/><rect x="41.3" y="0.0" width="21.3" height="22.1" fill="#8a6a88"/><rect x="62.0" y="0.0" width="21.3" height="22.1" fill="#9a7a98"/><rect x="82.7" y="0.0" width="21.3" height="22.1" fill="#8a6a80"/><rect x="103.3" y="0.0" width="21.3" height="22.1" fill="#4a3a48"/><rect x="0.0" y="21.5" width="21.3" height="22.1" fill="#8a6a68"/><rect x="20.7" y="21.5" width="21.3" height="22.1" fill="#9a7090"/><rect x="41.3" y="21.5" width="21.3" height="22.1" fill="#a07a98"/><rect x="62.0" y="21.5" width="21.3" height="22.1" fill="#6a4a5a"/><rect x="82.7" y="21.5" width="21.3" height="22.1" fill="#b090a0"/><rect x="103.3" y="21.5" width="21.3" height="22.1" fill="#6a5060"/><rect x="0.0" y="43.0" width="21.3" height="22.1" fill="#8a6080"/><rect x="20.7" y="43.0" width="21.3" height="22.1" fill="#7a5a70"/><rect x="41.3" y="43.0" width="21.3" height="22.1" fill="#6a4a60"/><rect x="62.0" y="43.0" width="21.3" height="22.1" fill="#d8d4d8"/><rect x="82.7" y="43.0" width="21.3" height="22.1" fill="#c8c4c8"/><rect x="103.3" y="43.0" width="21.3" height="22.1" fill="#6a5a68"/><rect x="0.0" y="64.5" width="21.3" height="22.1" fill="#6a4a60"/><rect x="20.7" y="64.5" width="21.3" height="22.1" fill="#7a5a70"/><rect x="41.3" y="64.5" width="21.3" height="22.1" fill="#8a6a80"/><rect x="62.0" y="64.5" width="21.3" height="22.1" fill="#d0ccd0"/><rect x="82.7" y="64.5" width="21.3" height="22.1" fill="#c0bcc0"/><rect x="103.3" y="64.5" width="21.3" height="22.1" fill="#5a4a58"/></g><g filter="url(#pb2)" transform="translate(13,-893)"><ellipse cx="50" cy="920" rx="30" ry="25" fill="#7a5a7e" opacity="0.45"/><rect x="6" y="925" width="7" height="55" fill="#8a5a7e" opacity="0.7"/><rect x="85" y="925" width="7" height="55" fill="#8a5a7e" opacity="0.7"/><ellipse cx="8" cy="926" rx="3.5" ry="3.5" fill="#f0e0c0"/><ellipse cx="88" cy="925" rx="3.5" ry="3.5" fill="#f0e0c0"/><path d="M42 968 L55 945 L68 940 L75 960 L80 980 L40 980Z" fill="#d0ced4"/><path d="M67 922 L72 925 L80 950 L87 978 L75 978 L68 940Z" fill="#e8e8ee"/><ellipse cx="57" cy="922" rx="10" ry="10" fill="#262024"/><ellipse cx="52" cy="935" rx="5" ry="5" fill="#a08078"/><ellipse cx="33" cy="956" rx="13" ry="11" fill="#6a3a6a"/><ellipse cx="35" cy="950" rx="4" ry="3" fill="#e0d8d8"/></g></svg></div>
<div class="a" style="left:82px;top:964px;width:30px;height:16px;background:#000"><div style="position:absolute;left:1px;top:1px;width:28px;height:14px;background:#c8c8c8"></div><div style="position:absolute;left:2px;top:2px;width:13px;height:12px;background:#000"></div><div style="position:absolute;left:16px;top:2px;width:12px;height:12px;background:#000"></div><div style="position:absolute;left:4px;top:5px;width:9px;height:6px;border:1px dotted #fff"></div><div style="position:absolute;left:18px;top:3px;width:9px;height:9px;background:linear-gradient(135deg,transparent 50%,#ccc 50%)"></div><div style="position:absolute;left:17px;top:5px;width:5px;height:1px;background:#fff"></div><div style="position:absolute;left:19px;top:3px;width:1px;height:5px;background:#fff"></div></div>
<div class="num" style="left:130px;top:849.0px">384</div>
<div class="a" style="left:268px;top:859px;width:17px;height:13px;border:1px dotted #2a2a2a"><div style="position:absolute;left:7px;top:2px;width:1px;height:5px;background:#111"></div><div style="position:absolute;left:7px;top:8px;width:1px;height:1px;background:#111"></div></div>
<div class="ph" style="left:146px;top:892px;width:126px;height:88px"><svg width="124" height="86" style="display:block"><g filter="url(#pb)"><rect x="0.0" y="0.0" width="62.6" height="22.1" fill="#5a4048"/><rect x="62.0" y="0.0" width="62.6" height="22.1" fill="#5a4048"/><rect x="0.0" y="21.5" width="62.6" height="22.1" fill="#7a5a48"/><rect x="62.0" y="21.5" width="62.6" height="22.1" fill="#7a5a48"/><rect x="0.0" y="43.0" width="62.6" height="22.1" fill="#6a4a50"/><rect x="62.0" y="43.0" width="62.6" height="22.1" fill="#6a4a50"/><rect x="0.0" y="64.5" width="62.6" height="22.1" fill="#5a4048"/><rect x="62.0" y="64.5" width="62.6" height="22.1" fill="#5a4048"/></g></svg></div>
<div class="num" style="left:290px;top:849.0px">385</div>
<div class="num" style="left:450px;top:849.0px">386</div>
<div class="a" style="left:588px;top:859px;width:17px;height:13px;border:1px dotted #2a2a2a"><div style="position:absolute;left:7px;top:2px;width:1px;height:5px;background:#111"></div><div style="position:absolute;left:7px;top:8px;width:1px;height:1px;background:#111"></div></div>
<div class="num" style="left:610px;top:849.0px">387</div>
<div class="num" style="left:770px;top:849.0px">388</div>
<div class="a" style="left:908px;top:859px;width:17px;height:13px;border:1px dotted #2a2a2a"><div style="position:absolute;left:7px;top:2px;width:1px;height:5px;background:#111"></div><div style="position:absolute;left:7px;top:8px;width:1px;height:1px;background:#111"></div></div>
<div class="num" style="left:930px;top:849.0px">389</div>
<div class="ph" style="left:946px;top:892px;width:126px;height:88px"><svg width="124" height="86" style="display:block"><g filter="url(#pb)"><rect x="0.0" y="0.0" width="21.3" height="22.1" fill="#6a4a68"/><rect x="20.7" y="0.0" width="21.3" height="22.1" fill="#6a4a68"/><rect x="41.3" y="0.0" width="21.3" height="22.1" fill="#6a4a68"/><rect x="62.0" y="0.0" width="21.3" height="22.1" fill="#6a4a68"/><rect x="82.7" y="0.0" width="21.3" height="22.1" fill="#9a7090"/><rect x="103.3" y="0.0" width="21.3" height="22.1" fill="#6a5068"/><rect x="0.0" y="21.5" width="21.3" height="22.1" fill="#8a8088"/><rect x="20.7" y="21.5" width="21.3" height="22.1" fill="#8a8088"/><rect x="41.3" y="21.5" width="21.3" height="22.1" fill="#8a8088"/><rect x="62.0" y="21.5" width="21.3" height="22.1" fill="#8a8088"/><rect x="82.7" y="21.5" width="21.3" height="22.1" fill="#c0b4b0"/><rect x="103.3" y="21.5" width="21.3" height="22.1" fill="#8a6a80"/><rect x="0.0" y="43.0" width="21.3" height="22.1" fill="#c8c8cc"/><rect x="20.7" y="43.0" width="21.3" height="22.1" fill="#c8c8cc"/><rect x="41.3" y="43.0" width="21.3" height="22.1" fill="#c8c8cc"/><rect x="62.0" y="43.0" width="21.3" height="22.1" fill="#c8c8cc"/><rect x="82.7" y="43.0" width="21.3" height="22.1" fill="#d0d0d4"/><rect x="103.3" y="43.0" width="21.3" height="22.1" fill="#7a5a70"/><rect x="0.0" y="64.5" width="21.3" height="22.1" fill="#b8b8bc"/><rect x="20.7" y="64.5" width="21.3" height="22.1" fill="#b8b8bc"/><rect x="41.3" y="64.5" width="21.3" height="22.1" fill="#b8b8bc"/><rect x="62.0" y="64.5" width="21.3" height="22.1" fill="#b8b8bc"/><rect x="82.7" y="64.5" width="21.3" height="22.1" fill="#c0c0c4"/><rect x="103.3" y="64.5" width="21.3" height="22.1" fill="#6a5a68"/></g><g filter="url(#pb2)" transform="translate(-947,-893)"><rect x="946" y="893" width="126" height="87" fill="#6a4a64" opacity="0.5"/><rect x="1053" y="925" width="9" height="55" fill="#8a5a80" opacity="0.7"/><ellipse cx="1054" cy="920" rx="4" ry="4" fill="#f0e0c0"/><path d="M1000 905 L1030 900 L1045 940 L1048 980 L1000 980Z" fill="#e8e8ec"/><ellipse cx="1024" cy="912" rx="8" ry="8" fill="#262024"/></g></svg></div>
<div class="a" style="left:1042px;top:964px;width:30px;height:16px;background:#000"><div style="position:absolute;left:1px;top:1px;width:28px;height:14px;background:#c8c8c8"></div><div style="position:absolute;left:2px;top:2px;width:13px;height:12px;background:#000"></div><div style="position:absolute;left:16px;top:2px;width:12px;height:12px;background:#000"></div><div style="position:absolute;left:4px;top:5px;width:9px;height:6px;border:1px dotted #fff"></div><div style="position:absolute;left:18px;top:3px;width:9px;height:9px;background:linear-gradient(135deg,transparent 50%,#ccc 50%)"></div><div style="position:absolute;left:17px;top:5px;width:5px;height:1px;background:#fff"></div><div style="position:absolute;left:19px;top:3px;width:1px;height:5px;background:#fff"></div></div>
<div class="num" style="left:1090px;top:849.0px">390</div>
<div class="a" style="left:1228px;top:859px;width:17px;height:13px;border:1px dotted #2a2a2a"><div style="position:absolute;left:7px;top:2px;width:1px;height:5px;background:#111"></div><div style="position:absolute;left:7px;top:8px;width:1px;height:1px;background:#111"></div></div>
<div class="ph" style="left:1106px;top:892px;width:126px;height:88px"><svg width="124" height="86" style="display:block"><g filter="url(#pb)"><rect x="0.0" y="0.0" width="21.3" height="22.1" fill="#5a4050"/><rect x="20.7" y="0.0" width="21.3" height="22.1" fill="#8a5a80"/><rect x="41.3" y="0.0" width="21.3" height="22.1" fill="#9a6a90"/><rect x="62.0" y="0.0" width="21.3" height="22.1" fill="#5a4850"/><rect x="82.7" y="0.0" width="21.3" height="22.1" fill="#9a7890"/><rect x="103.3" y="0.0" width="21.3" height="22.1" fill="#5a4a50"/><rect x="0.0" y="21.5" width="21.3" height="22.1" fill="#a08880"/><rect x="20.7" y="21.5" width="21.3" height="22.1" fill="#8a6080"/><rect x="41.3" y="21.5" width="21.3" height="22.1" fill="#9a6a90"/><rect x="62.0" y="21.5" width="21.3" height="22.1" fill="#6a5a60"/><rect x="82.7" y="21.5" width="21.3" height="22.1" fill="#b8b0b8"/><rect x="103.3" y="21.5" width="21.3" height="22.1" fill="#9a7888"/><rect x="0.0" y="43.0" width="21.3" height="22.1" fill="#7a5a70"/><rect x="20.7" y="43.0" width="21.3" height="22.1" fill="#6a4a60"/><rect x="41.3" y="43.0" width="21.3" height="22.1" fill="#7a5070"/><rect x="62.0" y="43.0" width="21.3" height="22.1" fill="#c8c4c8"/><rect x="82.7" y="43.0" width="21.3" height="22.1" fill="#d8d4d8"/><rect x="103.3" y="43.0" width="21.3" height="22.1" fill="#7a5a70"/><rect x="0.0" y="64.5" width="21.3" height="22.1" fill="#4a3a44"/><rect x="20.7" y="64.5" width="21.3" height="22.1" fill="#6a5070"/><rect x="41.3" y="64.5" width="21.3" height="22.1" fill="#705a78"/><rect x="62.0" y="64.5" width="21.3" height="22.1" fill="#c0bcc0"/><rect x="82.7" y="64.5" width="21.3" height="22.1" fill="#d0ccd0"/><rect x="103.3" y="64.5" width="21.3" height="22.1" fill="#4a4048"/></g><g filter="url(#pb2)"><ellipse cx="62" cy="18" rx="33" ry="25" fill="#7a5a80" opacity="0.45"/><rect x="12" y="30" width="8" height="56" fill="#8a5a80" opacity="0.7"/><rect x="104" y="30" width="8" height="56" fill="#8a5a80" opacity="0.7"/><ellipse cx="13" cy="28" rx="3.5" ry="3.5" fill="#f0e0c0"/><ellipse cx="106" cy="26" rx="3.5" ry="3.5" fill="#f0e0c0"/><ellipse cx="45" cy="62" rx="13" ry="12" fill="#7a5a80"/><ellipse cx="48" cy="58" rx="4" ry="3" fill="#e8e0e0"/><ellipse cx="40" cy="80" rx="10" ry="6" fill="#3a3030"/><path d="M49 73 L61 44 L76 40 L84 53 L92 86 L53 86Z" fill="#c8c6cc"/><path d="M81 27 L87 22 L97 43 L111 86 L87 86Z" fill="#e0e0e6"/><ellipse cx="71" cy="22" rx="11" ry="11" fill="#262024"/><ellipse cx="65" cy="35" rx="5" ry="5" fill="#a08078"/></g></svg></div>
<div class="num" style="left:1250px;top:849.0px">391</div>
<div class="ph" style="left:1266px;top:892px;width:126px;height:88px"><svg width="124" height="86" style="display:block"><g filter="url(#pb)"><rect x="0.0" y="0.0" width="62.6" height="22.1" fill="#4a3840"/><rect x="62.0" y="0.0" width="62.6" height="22.1" fill="#5a4850"/><rect x="0.0" y="21.5" width="62.6" height="22.1" fill="#7a6050"/><rect x="62.0" y="21.5" width="62.6" height="22.1" fill="#8a7050"/><rect x="0.0" y="43.0" width="62.6" height="22.1" fill="#9a8878"/><rect x="62.0" y="43.0" width="62.6" height="22.1" fill="#6a5a50"/><rect x="0.0" y="64.5" width="62.6" height="22.1" fill="#4a4038"/><rect x="62.0" y="64.5" width="62.6" height="22.1" fill="#3a3430"/></g><g filter="url(#pb2)" transform="translate(-1267,-893)"><rect x="1266" y="893" width="40" height="87" fill="#3e3430"/><ellipse cx="1282" cy="928" rx="16" ry="10" fill="#8a7050" opacity="0.8"/><ellipse cx="1280" cy="955" rx="9" ry="20" fill="#c8bca0" opacity="0.8"/><ellipse cx="1277" cy="947" rx="3.5" ry="3.5" fill="#f8f0d0"/><rect x="1266" y="972" width="40" height="8" fill="#2a2624"/></g></svg></div>
<div class="a" style="left:1362px;top:964px;width:30px;height:16px;background:#000"><div style="position:absolute;left:1px;top:1px;width:28px;height:14px;background:#c8c8c8"></div><div style="position:absolute;left:2px;top:2px;width:13px;height:12px;background:#000"></div><div style="position:absolute;left:16px;top:2px;width:12px;height:12px;background:#000"></div><div style="position:absolute;left:4px;top:5px;width:9px;height:6px;border:1px dotted #fff"></div><div style="position:absolute;left:18px;top:3px;width:9px;height:9px;background:linear-gradient(135deg,transparent 50%,#ccc 50%)"></div><div style="position:absolute;left:17px;top:5px;width:5px;height:1px;background:#fff"></div><div style="position:absolute;left:19px;top:3px;width:1px;height:5px;background:#fff"></div></div>
<div class="num" style="left:-30px;top:1010.0px">397</div>
<div class="ph" style="left:-14px;top:1053px;width:126px;height:88px"><svg width="124" height="86" style="display:block"><g filter="url(#pb)"><rect x="0.0" y="0.0" width="21.3" height="22.1" fill="#4a3a48"/><rect x="20.7" y="0.0" width="21.3" height="22.1" fill="#5a4250"/><rect x="41.3" y="0.0" width="21.3" height="22.1" fill="#7a6060"/><rect x="62.0" y="0.0" width="21.3" height="22.1" fill="#6a4a68"/><rect x="82.7" y="0.0" width="21.3" height="22.1" fill="#3a3038"/><rect x="103.3" y="0.0" width="21.3" height="22.1" fill="#2a2428"/><rect x="0.0" y="21.5" width="21.3" height="22.1" fill="#5a4850"/><rect x="20.7" y="21.5" width="21.3" height="22.1" fill="#9a7a68"/><rect x="41.3" y="21.5" width="21.3" height="22.1" fill="#6a5060"/><rect x="62.0" y="21.5" width="21.3" height="22.1" fill="#6a5068"/><rect x="82.7" y="21.5" width="21.3" height="22.1" fill="#8a6a68"/><rect x="103.3" y="21.5" width="21.3" height="22.1" fill="#3a3034"/><rect x="0.0" y="43.0" width="21.3" height="22.1" fill="#6a5070"/><rect x="20.7" y="43.0" width="21.3" height="22.1" fill="#7a4a6a"/><rect x="41.3" y="43.0" width="21.3" height="22.1" fill="#8a6a70"/><rect x="62.0" y="43.0" width="21.3" height="22.1" fill="#6a5a58"/><rect x="82.7" y="43.0" width="21.3" height="22.1" fill="#6a5a58"/><rect x="103.3" y="43.0" width="21.3" height="22.1" fill="#8a8688"/><rect x="0.0" y="64.5" width="21.3" height="22.1" fill="#6a6a80"/><rect x="20.7" y="64.5" width="21.3" height="22.1" fill="#4a3048"/><rect x="41.3" y="64.5" width="21.3" height="22.1" fill="#7a5a68"/><rect x="62.0" y="64.5" width="21.3" height="22.1" fill="#6a5a58"/><rect x="82.7" y="64.5" width="21.3" height="22.1" fill="#4a3a48"/><rect x="103.3" y="64.5" width="21.3" height="22.1" fill="#5a5058"/></g><g filter="url(#pb2)" transform="translate(13,-1054)"><ellipse cx="62" cy="1085" rx="18" ry="22" fill="#7a5878" opacity="0.35"/><ellipse cx="32" cy="1082" rx="10" ry="10" fill="#a08070" opacity="0.6"/><ellipse cx="32" cy="1082" rx="6" ry="6" fill="#f0d8b0"/><path d="M75 1070 L90 1058 L111 1055 L111 1115 L95 1100 L80 1080Z" fill="#1e1a1e"/><ellipse cx="90" cy="1098" rx="8" ry="13" fill="#a88078"/><path d="M88 1120 L111 1110 L111 1141 L85 1141Z" fill="#c8c6c8"/><ellipse cx="35" cy="1128" rx="36" ry="16" fill="#6a3a5a"/><ellipse cx="40" cy="1120" rx="7" ry="6" fill="#e0dcd0"/><ellipse cx="62" cy="1121" rx="6" ry="4" fill="#4a7040"/><ellipse cx="20" cy="1118" rx="5" ry="5" fill="#a03a60"/><ellipse cx="8" cy="1125" rx="5" ry="6" fill="#8aa0b0"/></g></svg></div>
<div class="a" style="left:82px;top:1125px;width:30px;height:16px;background:#000"><div style="position:absolute;left:1px;top:1px;width:28px;height:14px;background:#c8c8c8"></div><div style="position:absolute;left:2px;top:2px;width:13px;height:12px;background:#000"></div><div style="position:absolute;left:16px;top:2px;width:12px;height:12px;background:#000"></div><div style="position:absolute;left:4px;top:5px;width:9px;height:6px;border:1px dotted #fff"></div><div style="position:absolute;left:18px;top:3px;width:9px;height:9px;background:linear-gradient(135deg,transparent 50%,#ccc 50%)"></div><div style="position:absolute;left:17px;top:5px;width:5px;height:1px;background:#fff"></div><div style="position:absolute;left:19px;top:3px;width:1px;height:5px;background:#fff"></div></div>
<div class="num" style="left:130px;top:1010.0px">398</div>
<div class="a" style="left:268px;top:1020px;width:17px;height:13px;border:1px dotted #2a2a2a"><div style="position:absolute;left:7px;top:2px;width:1px;height:5px;background:#111"></div><div style="position:absolute;left:7px;top:8px;width:1px;height:1px;background:#111"></div></div>
<div class="ph" style="left:146px;top:1053px;width:126px;height:88px"><svg width="124" height="86" style="display:block"><g filter="url(#pb)"><rect x="0.0" y="0.0" width="62.6" height="22.1" fill="#5a4038"/><rect x="62.0" y="0.0" width="62.6" height="22.1" fill="#5a4038"/><rect x="0.0" y="21.5" width="62.6" height="22.1" fill="#6a4a40"/><rect x="62.0" y="21.5" width="62.6" height="22.1" fill="#6a4a40"/><rect x="0.0" y="43.0" width="62.6" height="22.1" fill="#5a4038"/><rect x="62.0" y="43.0" width="62.6" height="22.1" fill="#5a4038"/><rect x="0.0" y="64.5" width="62.6" height="22.1" fill="#6a6060"/><rect x="62.0" y="64.5" width="62.6" height="22.1" fill="#6a6060"/></g></svg></div>
<div class="num" style="left:290px;top:1010.0px">399</div>
<div class="num" style="left:450px;top:1010.0px">400</div>
<div class="a" style="left:588px;top:1020px;width:17px;height:13px;border:1px dotted #2a2a2a"><div style="position:absolute;left:7px;top:2px;width:1px;height:5px;background:#111"></div><div style="position:absolute;left:7px;top:8px;width:1px;height:1px;background:#111"></div></div>
<div class="num" style="left:610px;top:1010.0px">401</div>
<div class="num" style="left:770px;top:1010.0px">402</div>
<div class="a" style="left:908px;top:1020px;width:17px;height:13px;border:1px dotted #2a2a2a"><div style="position:absolute;left:7px;top:2px;width:1px;height:5px;background:#111"></div><div style="position:absolute;left:7px;top:8px;width:1px;height:1px;background:#111"></div></div>
<div class="num" style="left:930px;top:1010.0px">403</div>
<div class="ph" style="left:946px;top:1053px;width:126px;height:88px"><svg width="124" height="86" style="display:block"><g filter="url(#pb)"><rect x="0.0" y="0.0" width="21.3" height="22.1" fill="#a898a8"/><rect x="20.7" y="0.0" width="21.3" height="22.1" fill="#a898a8"/><rect x="41.3" y="0.0" width="21.3" height="22.1" fill="#a898a8"/><rect x="62.0" y="0.0" width="21.3" height="22.1" fill="#a898a8"/><rect x="82.7" y="0.0" width="21.3" height="22.1" fill="#a89890"/><rect x="103.3" y="0.0" width="21.3" height="22.1" fill="#9a9098"/><rect x="0.0" y="21.5" width="21.3" height="22.1" fill="#6a5a70"/><rect x="20.7" y="21.5" width="21.3" height="22.1" fill="#6a5a70"/><rect x="41.3" y="21.5" width="21.3" height="22.1" fill="#6a5a70"/><rect x="62.0" y="21.5" width="21.3" height="22.1" fill="#6a5a70"/><rect x="82.7" y="21.5" width="21.3" height="22.1" fill="#a8a0a4"/><rect x="103.3" y="21.5" width="21.3" height="22.1" fill="#c0b0b0"/><rect x="0.0" y="43.0" width="21.3" height="22.1" fill="#8a8088"/><rect x="20.7" y="43.0" width="21.3" height="22.1" fill="#8a8088"/><rect x="41.3" y="43.0" width="21.3" height="22.1" fill="#8a8088"/><rect x="62.0" y="43.0" width="21.3" height="22.1" fill="#8a8088"/><rect x="82.7" y="43.0" width="21.3" height="22.1" fill="#9a9498"/><rect x="103.3" y="43.0" width="21.3" height="22.1" fill="#b8a8ac"/><rect x="0.0" y="64.5" width="21.3" height="22.1" fill="#b0acac"/><rect x="20.7" y="64.5" width="21.3" height="22.1" fill="#b0acac"/><rect x="41.3" y="64.5" width="21.3" height="22.1" fill="#b0acac"/><rect x="62.0" y="64.5" width="21.3" height="22.1" fill="#b0acac"/><rect x="82.7" y="64.5" width="21.3" height="22.1" fill="#a8a4a4"/><rect x="103.3" y="64.5" width="21.3" height="22.1" fill="#9a9696"/></g><g filter="url(#pb2)" transform="translate(-947,-1054)"><rect x="946" y="1054" width="126" height="87" fill="#9a9298" opacity="0.5"/><ellipse cx="1035" cy="1070" rx="14" ry="10" fill="#b8a0a0" opacity="0.8"/><ellipse cx="1066" cy="1090" rx="8" ry="8" fill="#a89878" opacity="0.8"/><rect x="1050" y="1060" width="8" height="81" fill="#c8bcc0"/><ellipse cx="1054" cy="1072" rx="3" ry="3" fill="#f0e8d8"/><rect x="1026" y="1088" width="4" height="40" fill="#4a3a48"/><path d="M1000 1112 L1040 1110 L1046 1141 L1000 1141Z" fill="#c8c4c4"/></g></svg></div>
<div class="a" style="left:1042px;top:1125px;width:30px;height:16px;background:#000"><div style="position:absolute;left:1px;top:1px;width:28px;height:14px;background:#c8c8c8"></div><div style="position:absolute;left:2px;top:2px;width:13px;height:12px;background:#000"></div><div style="position:absolute;left:16px;top:2px;width:12px;height:12px;background:#000"></div><div style="position:absolute;left:4px;top:5px;width:9px;height:6px;border:1px dotted #fff"></div><div style="position:absolute;left:18px;top:3px;width:9px;height:9px;background:linear-gradient(135deg,transparent 50%,#ccc 50%)"></div><div style="position:absolute;left:17px;top:5px;width:5px;height:1px;background:#fff"></div><div style="position:absolute;left:19px;top:3px;width:1px;height:5px;background:#fff"></div></div>
<div class="num" style="left:1090px;top:1010.0px">404</div>
<div class="a" style="left:1228px;top:1020px;width:17px;height:13px;border:1px dotted #2a2a2a"><div style="position:absolute;left:7px;top:2px;width:1px;height:5px;background:#111"></div><div style="position:absolute;left:7px;top:8px;width:1px;height:1px;background:#111"></div></div>
<div class="ph" style="left:1106px;top:1053px;width:126px;height:88px"><svg width="124" height="86" style="display:block"><g filter="url(#pb)"><rect x="0.0" y="0.0" width="21.3" height="22.1" fill="#9a929a"/><rect x="20.7" y="0.0" width="21.3" height="22.1" fill="#b0a4b4"/><rect x="41.3" y="0.0" width="21.3" height="22.1" fill="#b8a0a8"/><rect x="62.0" y="0.0" width="21.3" height="22.1" fill="#b09ca0"/><rect x="82.7" y="0.0" width="21.3" height="22.1" fill="#a89898"/><rect x="103.3" y="0.0" width="21.3" height="22.1" fill="#9a9098"/><rect x="0.0" y="21.5" width="21.3" height="22.1" fill="#9a9088"/><rect x="20.7" y="21.5" width="21.3" height="22.1" fill="#c8b8b8"/><rect x="41.3" y="21.5" width="21.3" height="22.1" fill="#8a8090"/><rect x="62.0" y="21.5" width="21.3" height="22.1" fill="#8a7a80"/><rect x="82.7" y="21.5" width="21.3" height="22.1" fill="#c0b0b4"/><rect x="103.3" y="21.5" width="21.3" height="22.1" fill="#a09888"/><rect x="0.0" y="43.0" width="21.3" height="22.1" fill="#7a7278"/><rect x="20.7" y="43.0" width="21.3" height="22.1" fill="#b0a4a8"/><rect x="41.3" y="43.0" width="21.3" height="22.1" fill="#c8c4c4"/><rect x="62.0" y="43.0" width="21.3" height="22.1" fill="#9a7888"/><rect x="82.7" y="43.0" width="21.3" height="22.1" fill="#b8b4b4"/><rect x="103.3" y="43.0" width="21.3" height="22.1" fill="#8a8288"/><rect x="0.0" y="64.5" width="21.3" height="22.1" fill="#5a5658"/><rect x="20.7" y="64.5" width="21.3" height="22.1" fill="#8a8484"/><rect x="41.3" y="64.5" width="21.3" height="22.1" fill="#b0acac"/><rect x="62.0" y="64.5" width="21.3" height="22.1" fill="#d8d8dc"/><rect x="82.7" y="64.5" width="21.3" height="22.1" fill="#b0acac"/><rect x="103.3" y="64.5" width="21.3" height="22.1" fill="#6a6668"/></g><g filter="url(#pb2)"><rect x="0" y="0" width="10" height="86" fill="#6a6468" opacity="0.5"/><rect x="114" y="0" width="10" height="86" fill="#6a6468" opacity="0.5"/><path d="M0 25 L25 8 L50 4 L95 5 L124 30 L124 45 L100 22 L50 18 L20 25 L0 40Z" fill="#b0a098" opacity="0.8"/><rect x="18" y="20" width="7" height="60" fill="#c8bcc0"/><rect x="102" y="20" width="8" height="60" fill="#c8bcc0"/><ellipse cx="21" cy="22" rx="3" ry="3" fill="#f0e8d8"/><ellipse cx="106" cy="22" rx="3" ry="3" fill="#f0e8d8"/><rect x="43" y="38" width="4" height="17" fill="#6a4a70"/><rect x="80" y="38" width="4" height="22" fill="#6a4a70"/><path d="M24 58 L40 52 L100 56 L104 86 L22 86Z" fill="#c8c4c4"/><rect x="0" y="80" width="124" height="6" fill="#5a5658"/><path d="M51 59 L57 42 L67 40 L77 45 L79 61 L73 86 L46 86Z" fill="#e0dee2"/><ellipse cx="67" cy="29" rx="6" ry="6" fill="#262024"/><ellipse cx="64" cy="37" rx="4" ry="4" fill="#d8b4a4"/><ellipse cx="65" cy="62" rx="9" ry="8" fill="#6a2a50"/></g></svg></div>
<div class="num" style="left:1250px;top:1010.0px">405</div>
<div class="ph" style="left:1285px;top:1034px;width:88px;height:126px"><svg width="86" height="124" style="display:block"><g filter="url(#pb)"><rect x="0.0" y="0.0" width="86.6" height="21.3" fill="#8a7a88"/><rect x="0.0" y="20.7" width="86.6" height="21.3" fill="#a0909a"/><rect x="0.0" y="41.3" width="86.6" height="21.3" fill="#a09898"/><rect x="0.0" y="62.0" width="86.6" height="21.3" fill="#b8b0b0"/><rect x="0.0" y="82.7" width="86.6" height="21.3" fill="#a0a0a0"/><rect x="0.0" y="103.3" width="86.6" height="21.3" fill="#6a6a6a"/></g><g filter="url(#pb2)" transform="translate(-1286,-1035)"><rect x="1286" y="1035" width="12" height="125" fill="#9a909a"/><rect x="1290" y="1060" width="8" height="70" fill="#d0c8cc"/><rect x="1286" y="1140" width="12" height="20" fill="#4a4a4e"/></g></svg></div>
<div class="a" style="left:1343px;top:1144px;width:30px;height:16px;background:#000"><div style="position:absolute;left:1px;top:1px;width:28px;height:14px;background:#c8c8c8"></div><div style="position:absolute;left:2px;top:2px;width:13px;height:12px;background:#000"></div><div style="position:absolute;left:16px;top:2px;width:12px;height:12px;background:#000"></div><div style="position:absolute;left:4px;top:5px;width:9px;height:6px;border:1px dotted #fff"></div><div style="position:absolute;left:18px;top:3px;width:9px;height:9px;background:linear-gradient(135deg,transparent 50%,#ccc 50%)"></div><div style="position:absolute;left:17px;top:5px;width:5px;height:1px;background:#fff"></div><div style="position:absolute;left:19px;top:3px;width:1px;height:5px;background:#fff"></div></div>
<div class="num" style="left:-30px;top:1171.0px">411</div>
<div class="ph" style="left:-14px;top:1214px;width:126px;height:88px"><svg width="124" height="86" style="display:block"><g filter="url(#pb)"><rect x="0.0" y="0.0" width="21.3" height="22.1" fill="#b8b0b8"/><rect x="20.7" y="0.0" width="21.3" height="22.1" fill="#c0b8c0"/><rect x="41.3" y="0.0" width="21.3" height="22.1" fill="#d0c8cc"/><rect x="62.0" y="0.0" width="21.3" height="22.1" fill="#c8c0c8"/><rect x="82.7" y="0.0" width="21.3" height="22.1" fill="#b8b0b8"/><rect x="103.3" y="0.0" width="21.3" height="22.1" fill="#a8a0a8"/><rect x="0.0" y="21.5" width="21.3" height="22.1" fill="#a89888"/><rect x="20.7" y="21.5" width="21.3" height="22.1" fill="#c8b8b0"/><rect x="41.3" y="21.5" width="21.3" height="22.1" fill="#b8a0a0"/><rect x="62.0" y="21.5" width="21.3" height="22.1" fill="#908088"/><rect x="82.7" y="21.5" width="21.3" height="22.1" fill="#c0b0b0"/><rect x="103.3" y="21.5" width="21.3" height="22.1" fill="#a09888"/><rect x="0.0" y="43.0" width="21.3" height="22.1" fill="#8a8088"/><rect x="20.7" y="43.0" width="21.3" height="22.1" fill="#b0a8a8"/><rect x="41.3" y="43.0" width="21.3" height="22.1" fill="#c8c4c4"/><rect x="62.0" y="43.0" width="21.3" height="22.1" fill="#d8d4d8"/><rect x="82.7" y="43.0" width="21.3" height="22.1" fill="#c0bcbc"/><rect x="103.3" y="43.0" width="21.3" height="22.1" fill="#8a8488"/><rect x="0.0" y="64.5" width="21.3" height="22.1" fill="#8a8488"/><rect x="20.7" y="64.5" width="21.3" height="22.1" fill="#b0acb0"/><rect x="41.3" y="64.5" width="21.3" height="22.1" fill="#c8c4c8"/><rect x="62.0" y="64.5" width="21.3" height="22.1" fill="#dcd8dc"/><rect x="82.7" y="64.5" width="21.3" height="22.1" fill="#b8b4b8"/><rect x="103.3" y="64.5" width="21.3" height="22.1" fill="#9a969a"/></g><g filter="url(#pb2)" transform="translate(13,-1215)"><rect x="0" y="1215" width="8" height="87" fill="#8a8288" opacity="0.6"/><path d="M20 1252 A29 29 0 0 1 78 1252" fill="none" stroke="#d8d0d4" stroke-width="3"/><rect x="17" y="1240" width="5" height="60" fill="#c8bcc0"/><rect x="77" y="1240" width="5" height="60" fill="#c8bcc0"/><ellipse cx="19" cy="1243" rx="3" ry="3" fill="#f0e8d8"/><ellipse cx="80" cy="1243" rx="3" ry="3" fill="#f0e8d8"/><ellipse cx="50" cy="1245" rx="20" ry="12" fill="#b8a0a0"/><ellipse cx="8" cy="1252" rx="10" ry="9" fill="#a09880"/><ellipse cx="100" cy="1255" rx="12" ry="10" fill="#a09880"/><rect x="2" y="1262" width="3" height="38" fill="#3a3438"/><rect x="94" y="1265" width="3" height="25" fill="#3a3438"/><path d="M20 1270 L78 1272 L78 1302 L20 1302Z" fill="#c8c4c8"/><rect x="0" y="1295" width="111" height="7" fill="#8a8488"/><path d="M40 1265 L48 1252 L58 1255 L60 1270 L62 1302 L32 1302Z" fill="#dcdce0"/><ellipse cx="48" cy="1244" rx="4" ry="4" fill="#262024"/><ellipse cx="48" cy="1260" rx="7" ry="5" fill="#5a2a40"/></g></svg></div>
<div class="a" style="left:82px;top:1286px;width:30px;height:16px;background:#000"><div style="position:absolute;left:1px;top:1px;width:28px;height:14px;background:#c8c8c8"></div><div style="position:absolute;left:2px;top:2px;width:13px;height:12px;background:#000"></div><div style="position:absolute;left:16px;top:2px;width:12px;height:12px;background:#000"></div><div style="position:absolute;left:4px;top:5px;width:9px;height:6px;border:1px dotted #fff"></div><div style="position:absolute;left:18px;top:3px;width:9px;height:9px;background:linear-gradient(135deg,transparent 50%,#ccc 50%)"></div><div style="position:absolute;left:17px;top:5px;width:5px;height:1px;background:#fff"></div><div style="position:absolute;left:19px;top:3px;width:1px;height:5px;background:#fff"></div></div>
<div class="num" style="left:130px;top:1171.0px">412</div>
<div class="a" style="left:268px;top:1181px;width:17px;height:13px;border:1px dotted #2a2a2a"><div style="position:absolute;left:7px;top:2px;width:1px;height:5px;background:#111"></div><div style="position:absolute;left:7px;top:8px;width:1px;height:1px;background:#111"></div></div>
<div class="ph" style="left:146px;top:1214px;width:126px;height:88px"><svg width="124" height="86" style="display:block"><g filter="url(#pb3)"><rect x="0.0" y="0.0" width="21.3" height="11.3" fill="#a8a4a0"/><rect x="20.7" y="0.0" width="21.3" height="11.3" fill="#a8a4a0"/><rect x="41.3" y="0.0" width="21.3" height="11.3" fill="#a8a4a0"/><rect x="62.0" y="0.0" width="21.3" height="11.3" fill="#a8a4a0"/><rect x="82.7" y="0.0" width="21.3" height="11.3" fill="#a8a4a0"/><rect x="103.3" y="0.0" width="21.3" height="11.3" fill="#a8a4a0"/><rect x="0.0" y="10.8" width="21.3" height="11.3" fill="#a8a4a0"/><rect x="20.7" y="10.8" width="21.3" height="11.3" fill="#a8a4a0"/><rect x="41.3" y="10.8" width="21.3" height="11.3" fill="#a8a4a0"/><rect x="62.0" y="10.8" width="21.3" height="11.3" fill="#a8a4a0"/><rect x="82.7" y="10.8" width="21.3" height="11.3" fill="#a8a4a0"/><rect x="103.3" y="10.8" width="21.3" height="11.3" fill="#a8a4a0"/><rect x="0.0" y="21.5" width="21.3" height="11.3" fill="#a8a4a0"/><rect x="20.7" y="21.5" width="21.3" height="11.3" fill="#a8a4a0"/><rect x="41.3" y="21.5" width="21.3" height="11.3" fill="#a8a4a0"/><rect x="62.0" y="21.5" width="21.3" height="11.3" fill="#a8a4a0"/><rect x="82.7" y="21.5" width="21.3" height="11.3" fill="#a8a4a0"/><rect x="103.3" y="21.5" width="21.3" height="11.3" fill="#a8a4a0"/><rect x="0.0" y="32.2" width="21.3" height="11.3" fill="#a8a4a0"/><rect x="20.7" y="32.2" width="21.3" height="11.3" fill="#a8a4a0"/><rect x="41.3" y="32.2" width="21.3" height="11.3" fill="#a8a4a0"/><rect x="62.0" y="32.2" width="21.3" height="11.3" fill="#a8a4a0"/><rect x="82.7" y="32.2" width="21.3" height="11.3" fill="#a8a4a0"/><rect x="103.3" y="32.2" width="21.3" height="11.3" fill="#a8a4a0"/><rect x="0.0" y="43.0" width="21.3" height="11.3" fill="#a8a4a0"/><rect x="20.7" y="43.0" width="21.3" height="11.3" fill="#a8a4a0"/><rect x="41.3" y="43.0" width="21.3" height="11.3" fill="#a8a4a0"/><rect x="62.0" y="43.0" width="21.3" height="11.3" fill="#a8a4a0"/><rect x="82.7" y="43.0" width="21.3" height="11.3" fill="#a8a4a0"/><rect x="103.3" y="43.0" width="21.3" height="11.3" fill="#a8a4a0"/><rect x="0.0" y="53.8" width="21.3" height="11.3" fill="#a8a4a0"/><rect x="20.7" y="53.8" width="21.3" height="11.3" fill="#a8a4a0"/><rect x="41.3" y="53.8" width="21.3" height="11.3" fill="#a8a4a0"/><rect x="62.0" y="53.8" width="21.3" height="11.3" fill="#a8a4a0"/><rect x="82.7" y="53.8" width="21.3" height="11.3" fill="#a8a4a0"/><rect x="103.3" y="53.8" width="21.3" height="11.3" fill="#a8a4a0"/><rect x="0.0" y="64.5" width="21.3" height="11.3" fill="#9a9690"/><rect x="20.7" y="64.5" width="21.3" height="11.3" fill="#b0aca8"/><rect x="41.3" y="64.5" width="21.3" height="11.3" fill="#c0c0c4"/><rect x="62.0" y="64.5" width="21.3" height="11.3" fill="#b0b0b0"/><rect x="82.7" y="64.5" width="21.3" height="11.3" fill="#a89890"/><rect x="103.3" y="64.5" width="21.3" height="11.3" fill="#8a8480"/><rect x="0.0" y="75.2" width="21.3" height="11.3" fill="#8a8480"/><rect x="20.7" y="75.2" width="21.3" height="11.3" fill="#a8a4a0"/><rect x="41.3" y="75.2" width="21.3" height="11.3" fill="#c0c4c8"/><rect x="62.0" y="75.2" width="21.3" height="11.3" fill="#a8a8a8"/><rect x="82.7" y="75.2" width="21.3" height="11.3" fill="#9a9088"/><rect x="103.3" y="75.2" width="21.3" height="11.3" fill="#7a7470"/></g></svg></div>
<div class="num" style="left:290px;top:1171.0px">413</div>
<div class="ph" style="left:306px;top:1214px;width:126px;height:88px"><svg width="124" height="86" style="display:block"><g filter="url(#pb3)"><rect x="0.0" y="0.0" width="21.3" height="11.3" fill="#b8b0b8"/><rect x="20.7" y="0.0" width="21.3" height="11.3" fill="#b8b0b8"/><rect x="41.3" y="0.0" width="21.3" height="11.3" fill="#b8b0b8"/><rect x="62.0" y="0.0" width="21.3" height="11.3" fill="#b8b0b8"/><rect x="82.7" y="0.0" width="21.3" height="11.3" fill="#b8b0b8"/><rect x="103.3" y="0.0" width="21.3" height="11.3" fill="#b8b0b8"/><rect x="0.0" y="10.8" width="21.3" height="11.3" fill="#b8b0b8"/><rect x="20.7" y="10.8" width="21.3" height="11.3" fill="#b8b0b8"/><rect x="41.3" y="10.8" width="21.3" height="11.3" fill="#b8b0b8"/><rect x="62.0" y="10.8" width="21.3" height="11.3" fill="#b8b0b8"/><rect x="82.7" y="10.8" width="21.3" height="11.3" fill="#b8b0b8"/><rect x="103.3" y="10.8" width="21.3" height="11.3" fill="#b8b0b8"/><rect x="0.0" y="21.5" width="21.3" height="11.3" fill="#b8b0b8"/><rect x="20.7" y="21.5" width="21.3" height="11.3" fill="#b8b0b8"/><rect x="41.3" y="21.5" width="21.3" height="11.3" fill="#b8b0b8"/><rect x="62.0" y="21.5" width="21.3" height="11.3" fill="#b8b0b8"/><rect x="82.7" y="21.5" width="21.3" height="11.3" fill="#b8b0b8"/><rect x="103.3" y="21.5" width="21.3" height="11.3" fill="#b8b0b8"/><rect x="0.0" y="32.2" width="21.3" height="11.3" fill="#b8b0b8"/><rect x="20.7" y="32.2" width="21.3" height="11.3" fill="#b8b0b8"/><rect x="41.3" y="32.2" width="21.3" height="11.3" fill="#b8b0b8"/><rect x="62.0" y="32.2" width="21.3" height="11.3" fill="#b8b0b8"/><rect x="82.7" y="32.2" width="21.3" height="11.3" fill="#b8b0b8"/><rect x="103.3" y="32.2" width="21.3" height="11.3" fill="#b8b0b8"/><rect x="0.0" y="43.0" width="21.3" height="11.3" fill="#b8b0b8"/><rect x="20.7" y="43.0" width="21.3" height="11.3" fill="#b8b0b8"/><rect x="41.3" y="43.0" width="21.3" height="11.3" fill="#b8b0b8"/><rect x="62.0" y="43.0" width="21.3" height="11.3" fill="#b8b0b8"/><rect x="82.7" y="43.0" width="21.3" height="11.3" fill="#b8b0b8"/><rect x="103.3" y="43.0" width="21.3" height="11.3" fill="#b8b0b8"/><rect x="0.0" y="53.8" width="21.3" height="11.3" fill="#b8b0b8"/><rect x="20.7" y="53.8" width="21.3" height="11.3" fill="#b8b0b8"/><rect x="41.3" y="53.8" width="21.3" height="11.3" fill="#b8b0b8"/><rect x="62.0" y="53.8" width="21.3" height="11.3" fill="#b8b0b8"/><rect x="82.7" y="53.8" width="21.3" height="11.3" fill="#b8b0b8"/><rect x="103.3" y="53.8" width="21.3" height="11.3" fill="#b8b0b8"/><rect x="0.0" y="64.5" width="21.3" height="11.3" fill="#b0a0a4"/><rect x="20.7" y="64.5" width="21.3" height="11.3" fill="#b8b4b4"/><rect x="41.3" y="64.5" width="21.3" height="11.3" fill="#a09098"/><rect x="62.0" y="64.5" width="21.3" height="11.3" fill="#6a5a60"/><rect x="82.7" y="64.5" width="21.3" height="11.3" fill="#a8a4a8"/><rect x="103.3" y="64.5" width="21.3" height="11.3" fill="#b0acb0"/><rect x="0.0" y="75.2" width="21.3" height="11.3" fill="#b0a0a4"/><rect x="20.7" y="75.2" width="21.3" height="11.3" fill="#b8b4b4"/><rect x="41.3" y="75.2" width="21.3" height="11.3" fill="#d0d4d8"/><rect x="62.0" y="75.2" width="21.3" height="11.3" fill="#c8c8cc"/><rect x="82.7" y="75.2" width="21.3" height="11.3" fill="#b8b4b8"/><rect x="103.3" y="75.2" width="21.3" height="11.3" fill="#b0acb0"/></g></svg></div>
<div class="a" style="left:402px;top:1286px;width:30px;height:16px;background:#000"><div style="position:absolute;left:1px;top:1px;width:28px;height:14px;background:#c8c8c8"></div><div style="position:absolute;left:2px;top:2px;width:13px;height:12px;background:#000"></div><div style="position:absolute;left:16px;top:2px;width:12px;height:12px;background:#000"></div><div style="position:absolute;left:4px;top:5px;width:9px;height:6px;border:1px dotted #fff"></div><div style="position:absolute;left:18px;top:3px;width:9px;height:9px;background:linear-gradient(135deg,transparent 50%,#ccc 50%)"></div><div style="position:absolute;left:17px;top:5px;width:5px;height:1px;background:#fff"></div><div style="position:absolute;left:19px;top:3px;width:1px;height:5px;background:#fff"></div></div>
<div class="num" style="left:450px;top:1171.0px">414</div>
<div class="a" style="left:588px;top:1181px;width:17px;height:13px;border:1px dotted #2a2a2a"><div style="position:absolute;left:7px;top:2px;width:1px;height:5px;background:#111"></div><div style="position:absolute;left:7px;top:8px;width:1px;height:1px;background:#111"></div></div>
<div class="ph" style="left:466px;top:1214px;width:126px;height:88px"><svg width="124" height="86" style="display:block"><g filter="url(#pb3)"><rect x="0.0" y="0.0" width="21.3" height="11.3" fill="#b8b0b8"/><rect x="20.7" y="0.0" width="21.3" height="11.3" fill="#b8b0b8"/><rect x="41.3" y="0.0" width="21.3" height="11.3" fill="#b8b0b8"/><rect x="62.0" y="0.0" width="21.3" height="11.3" fill="#b8b0b8"/><rect x="82.7" y="0.0" width="21.3" height="11.3" fill="#b8b0b8"/><rect x="103.3" y="0.0" width="21.3" height="11.3" fill="#b8b0b8"/><rect x="0.0" y="10.8" width="21.3" height="11.3" fill="#b8b0b8"/><rect x="20.7" y="10.8" width="21.3" height="11.3" fill="#b8b0b8"/><rect x="41.3" y="10.8" width="21.3" height="11.3" fill="#b8b0b8"/><rect x="62.0" y="10.8" width="21.3" height="11.3" fill="#b8b0b8"/><rect x="82.7" y="10.8" width="21.3" height="11.3" fill="#b8b0b8"/><rect x="103.3" y="10.8" width="21.3" height="11.3" fill="#b8b0b8"/><rect x="0.0" y="21.5" width="21.3" height="11.3" fill="#b8b0b8"/><rect x="20.7" y="21.5" width="21.3" height="11.3" fill="#b8b0b8"/><rect x="41.3" y="21.5" width="21.3" height="11.3" fill="#b8b0b8"/><rect x="62.0" y="21.5" width="21.3" height="11.3" fill="#b8b0b8"/><rect x="82.7" y="21.5" width="21.3" height="11.3" fill="#b8b0b8"/><rect x="103.3" y="21.5" width="21.3" height="11.3" fill="#b8b0b8"/><rect x="0.0" y="32.2" width="21.3" height="11.3" fill="#b8b0b8"/><rect x="20.7" y="32.2" width="21.3" height="11.3" fill="#b8b0b8"/><rect x="41.3" y="32.2" width="21.3" height="11.3" fill="#b8b0b8"/><rect x="62.0" y="32.2" width="21.3" height="11.3" fill="#b8b0b8"/><rect x="82.7" y="32.2" width="21.3" height="11.3" fill="#b8b0b8"/><rect x="103.3" y="32.2" width="21.3" height="11.3" fill="#b8b0b8"/><rect x="0.0" y="43.0" width="21.3" height="11.3" fill="#b8b0b8"/><rect x="20.7" y="43.0" width="21.3" height="11.3" fill="#b8b0b8"/><rect x="41.3" y="43.0" width="21.3" height="11.3" fill="#b8b0b8"/><rect x="62.0" y="43.0" width="21.3" height="11.3" fill="#b8b0b8"/><rect x="82.7" y="43.0" width="21.3" height="11.3" fill="#b8b0b8"/><rect x="103.3" y="43.0" width="21.3" height="11.3" fill="#b8b0b8"/><rect x="0.0" y="53.8" width="21.3" height="11.3" fill="#b8b0b8"/><rect x="20.7" y="53.8" width="21.3" height="11.3" fill="#b8b0b8"/><rect x="41.3" y="53.8" width="21.3" height="11.3" fill="#b8b0b8"/><rect x="62.0" y="53.8" width="21.3" height="11.3" fill="#b8b0b8"/><rect x="82.7" y="53.8" width="21.3" height="11.3" fill="#b8b0b8"/><rect x="103.3" y="53.8" width="21.3" height="11.3" fill="#b8b0b8"/><rect x="0.0" y="64.5" width="21.3" height="11.3" fill="#b0a0a4"/><rect x="20.7" y="64.5" width="21.3" height="11.3" fill="#b8b4b4"/><rect x="41.3" y="64.5" width="21.3" height="11.3" fill="#a09098"/><rect x="62.0" y="64.5" width="21.3" height="11.3" fill="#6a5a60"/><rect x="82.7" y="64.5" width="21.3" height="11.3" fill="#a8a4a8"/><rect x="103.3" y="64.5" width="21.3" height="11.3" fill="#b0acb0"/><rect x="0.0" y="75.2" width="21.3" height="11.3" fill="#b0a0a4"/><rect x="20.7" y="75.2" width="21.3" height="11.3" fill="#b8b4b4"/><rect x="41.3" y="75.2" width="21.3" height="11.3" fill="#d0d4d8"/><rect x="62.0" y="75.2" width="21.3" height="11.3" fill="#c8c8cc"/><rect x="82.7" y="75.2" width="21.3" height="11.3" fill="#b8b4b8"/><rect x="103.3" y="75.2" width="21.3" height="11.3" fill="#b0acb0"/></g></svg></div>
<div class="num" style="left:610px;top:1171.0px">415</div>
<div class="ph" style="left:626px;top:1214px;width:126px;height:88px"><svg width="124" height="86" style="display:block"><g filter="url(#pb3)"><rect x="0.0" y="0.0" width="21.3" height="11.3" fill="#8a8688"/><rect x="20.7" y="0.0" width="21.3" height="11.3" fill="#8a8688"/><rect x="41.3" y="0.0" width="21.3" height="11.3" fill="#8a8688"/><rect x="62.0" y="0.0" width="21.3" height="11.3" fill="#8a8688"/><rect x="82.7" y="0.0" width="21.3" height="11.3" fill="#8a8688"/><rect x="103.3" y="0.0" width="21.3" height="11.3" fill="#8a8688"/><rect x="0.0" y="10.8" width="21.3" height="11.3" fill="#8a8688"/><rect x="20.7" y="10.8" width="21.3" height="11.3" fill="#8a8688"/><rect x="41.3" y="10.8" width="21.3" height="11.3" fill="#8a8688"/><rect x="62.0" y="10.8" width="21.3" height="11.3" fill="#8a8688"/><rect x="82.7" y="10.8" width="21.3" height="11.3" fill="#8a8688"/><rect x="103.3" y="10.8" width="21.3" height="11.3" fill="#8a8688"/><rect x="0.0" y="21.5" width="21.3" height="11.3" fill="#8a8688"/><rect x="20.7" y="21.5" width="21.3" height="11.3" fill="#8a8688"/><rect x="41.3" y="21.5" width="21.3" height="11.3" fill="#8a8688"/><rect x="62.0" y="21.5" width="21.3" height="11.3" fill="#8a8688"/><rect x="82.7" y="21.5" width="21.3" height="11.3" fill="#8a8688"/><rect x="103.3" y="21.5" width="21.3" height="11.3" fill="#8a8688"/><rect x="0.0" y="32.2" width="21.3" height="11.3" fill="#8a8688"/><rect x="20.7" y="32.2" width="21.3" height="11.3" fill="#8a8688"/><rect x="41.3" y="32.2" width="21.3" height="11.3" fill="#8a8688"/><rect x="62.0" y="32.2" width="21.3" height="11.3" fill="#8a8688"/><rect x="82.7" y="32.2" width="21.3" height="11.3" fill="#8a8688"/><rect x="103.3" y="32.2" width="21.3" height="11.3" fill="#8a8688"/><rect x="0.0" y="43.0" width="21.3" height="11.3" fill="#8a8688"/><rect x="20.7" y="43.0" width="21.3" height="11.3" fill="#8a8688"/><rect x="41.3" y="43.0" width="21.3" height="11.3" fill="#8a8688"/><rect x="62.0" y="43.0" width="21.3" height="11.3" fill="#8a8688"/><rect x="82.7" y="43.0" width="21.3" height="11.3" fill="#8a8688"/><rect x="103.3" y="43.0" width="21.3" height="11.3" fill="#8a8688"/><rect x="0.0" y="53.8" width="21.3" height="11.3" fill="#8a8688"/><rect x="20.7" y="53.8" width="21.3" height="11.3" fill="#8a8688"/><rect x="41.3" y="53.8" width="21.3" height="11.3" fill="#8a8688"/><rect x="62.0" y="53.8" width="21.3" height="11.3" fill="#8a8688"/><rect x="82.7" y="53.8" width="21.3" height="11.3" fill="#8a8688"/><rect x="103.3" y="53.8" width="21.3" height="11.3" fill="#8a8688"/><rect x="0.0" y="64.5" width="21.3" height="11.3" fill="#7a7678"/><rect x="20.7" y="64.5" width="21.3" height="11.3" fill="#b8b8bc"/><rect x="41.3" y="64.5" width="21.3" height="11.3" fill="#d0d0d4"/><rect x="62.0" y="64.5" width="21.3" height="11.3" fill="#c0c0c4"/><rect x="82.7" y="64.5" width="21.3" height="11.3" fill="#8a8688"/><rect x="103.3" y="64.5" width="21.3" height="11.3" fill="#8a8688"/><rect x="0.0" y="75.2" width="21.3" height="11.3" fill="#3a3a3c"/><rect x="20.7" y="75.2" width="21.3" height="11.3" fill="#5a5a5c"/><rect x="41.3" y="75.2" width="21.3" height="11.3" fill="#7a7a7c"/><rect x="62.0" y="75.2" width="21.3" height="11.3" fill="#6a6a6c"/><rect x="82.7" y="75.2" width="21.3" height="11.3" fill="#3a3a3c"/><rect x="103.3" y="75.2" width="21.3" height="11.3" fill="#3a3a3c"/></g></svg></div>
<div class="a" style="left:722px;top:1286px;width:30px;height:16px;background:#000"><div style="position:absolute;left:1px;top:1px;width:28px;height:14px;background:#c8c8c8"></div><div style="position:absolute;left:2px;top:2px;width:13px;height:12px;background:#000"></div><div style="position:absolute;left:16px;top:2px;width:12px;height:12px;background:#000"></div><div style="position:absolute;left:4px;top:5px;width:9px;height:6px;border:1px dotted #fff"></div><div style="position:absolute;left:18px;top:3px;width:9px;height:9px;background:linear-gradient(135deg,transparent 50%,#ccc 50%)"></div><div style="position:absolute;left:17px;top:5px;width:5px;height:1px;background:#fff"></div><div style="position:absolute;left:19px;top:3px;width:1px;height:5px;background:#fff"></div></div>
<div class="num" style="left:770px;top:1171.0px">416</div>
<div class="a" style="left:908px;top:1181px;width:17px;height:13px;border:1px dotted #2a2a2a"><div style="position:absolute;left:7px;top:2px;width:1px;height:5px;background:#111"></div><div style="position:absolute;left:7px;top:8px;width:1px;height:1px;background:#111"></div></div>
<div class="ph" style="left:786px;top:1214px;width:126px;height:88px"><svg width="124" height="86" style="display:block"><g filter="url(#pb3)"><rect x="0.0" y="0.0" width="21.3" height="11.3" fill="#8a8688"/><rect x="20.7" y="0.0" width="21.3" height="11.3" fill="#8a8688"/><rect x="41.3" y="0.0" width="21.3" height="11.3" fill="#8a8688"/><rect x="62.0" y="0.0" width="21.3" height="11.3" fill="#8a8688"/><rect x="82.7" y="0.0" width="21.3" height="11.3" fill="#8a8688"/><rect x="103.3" y="0.0" width="21.3" height="11.3" fill="#8a8688"/><rect x="0.0" y="10.8" width="21.3" height="11.3" fill="#8a8688"/><rect x="20.7" y="10.8" width="21.3" height="11.3" fill="#8a8688"/><rect x="41.3" y="10.8" width="21.3" height="11.3" fill="#8a8688"/><rect x="62.0" y="10.8" width="21.3" height="11.3" fill="#8a8688"/><rect x="82.7" y="10.8" width="21.3" height="11.3" fill="#8a8688"/><rect x="103.3" y="10.8" width="21.3" height="11.3" fill="#8a8688"/><rect x="0.0" y="21.5" width="21.3" height="11.3" fill="#8a8688"/><rect x="20.7" y="21.5" width="21.3" height="11.3" fill="#8a8688"/><rect x="41.3" y="21.5" width="21.3" height="11.3" fill="#8a8688"/><rect x="62.0" y="21.5" width="21.3" height="11.3" fill="#8a8688"/><rect x="82.7" y="21.5" width="21.3" height="11.3" fill="#8a8688"/><rect x="103.3" y="21.5" width="21.3" height="11.3" fill="#8a8688"/><rect x="0.0" y="32.2" width="21.3" height="11.3" fill="#8a8688"/><rect x="20.7" y="32.2" width="21.3" height="11.3" fill="#8a8688"/><rect x="41.3" y="32.2" width="21.3" height="11.3" fill="#8a8688"/><rect x="62.0" y="32.2" width="21.3" height="11.3" fill="#8a8688"/><rect x="82.7" y="32.2" width="21.3" height="11.3" fill="#8a8688"/><rect x="103.3" y="32.2" width="21.3" height="11.3" fill="#8a8688"/><rect x="0.0" y="43.0" width="21.3" height="11.3" fill="#8a8688"/><rect x="20.7" y="43.0" width="21.3" height="11.3" fill="#8a8688"/><rect x="41.3" y="43.0" width="21.3" height="11.3" fill="#8a8688"/><rect x="62.0" y="43.0" width="21.3" height="11.3" fill="#8a8688"/><rect x="82.7" y="43.0" width="21.3" height="11.3" fill="#8a8688"/><rect x="103.3" y="43.0" width="21.3" height="11.3" fill="#8a8688"/><rect x="0.0" y="53.8" width="21.3" height="11.3" fill="#8a8688"/><rect x="20.7" y="53.8" width="21.3" height="11.3" fill="#8a8688"/><rect x="41.3" y="53.8" width="21.3" height="11.3" fill="#8a8688"/><rect x="62.0" y="53.8" width="21.3" height="11.3" fill="#8a8688"/><rect x="82.7" y="53.8" width="21.3" height="11.3" fill="#8a8688"/><rect x="103.3" y="53.8" width="21.3" height="11.3" fill="#8a8688"/><rect x="0.0" y="64.5" width="21.3" height="11.3" fill="#7a7678"/><rect x="20.7" y="64.5" width="21.3" height="11.3" fill="#b8b8bc"/><rect x="41.3" y="64.5" width="21.3" height="11.3" fill="#d0d0d4"/><rect x="62.0" y="64.5" width="21.3" height="11.3" fill="#c0c0c4"/><rect x="82.7" y="64.5" width="21.3" height="11.3" fill="#8a8688"/><rect x="103.3" y="64.5" width="21.3" height="11.3" fill="#8a8688"/><rect x="0.0" y="75.2" width="21.3" height="11.3" fill="#3a3a3c"/><rect x="20.7" y="75.2" width="21.3" height="11.3" fill="#5a5a5c"/><rect x="41.3" y="75.2" width="21.3" height="11.3" fill="#7a7a7c"/><rect x="62.0" y="75.2" width="21.3" height="11.3" fill="#6a6a6c"/><rect x="82.7" y="75.2" width="21.3" height="11.3" fill="#3a3a3c"/><rect x="103.3" y="75.2" width="21.3" height="11.3" fill="#3a3a3c"/></g></svg></div>
<div class="num" style="left:930px;top:1171.0px">417</div>
<div class="ph" style="left:946px;top:1214px;width:126px;height:88px"><svg width="124" height="86" style="display:block"><g filter="url(#pb)"><rect x="0.0" y="0.0" width="21.3" height="22.1" fill="#a898a8"/><rect x="20.7" y="0.0" width="21.3" height="22.1" fill="#a898a8"/><rect x="41.3" y="0.0" width="21.3" height="22.1" fill="#a898a8"/><rect x="62.0" y="0.0" width="21.3" height="22.1" fill="#a898a8"/><rect x="82.7" y="0.0" width="21.3" height="22.1" fill="#a8a0ac"/><rect x="103.3" y="0.0" width="21.3" height="22.1" fill="#b0a8b0"/><rect x="0.0" y="21.5" width="21.3" height="22.1" fill="#c0b8b8"/><rect x="20.7" y="21.5" width="21.3" height="22.1" fill="#c0b8b8"/><rect x="41.3" y="21.5" width="21.3" height="22.1" fill="#c0b8b8"/><rect x="62.0" y="21.5" width="21.3" height="22.1" fill="#c0b8b8"/><rect x="82.7" y="21.5" width="21.3" height="22.1" fill="#a8a088"/><rect x="103.3" y="21.5" width="21.3" height="22.1" fill="#b8b4a8"/><rect x="0.0" y="43.0" width="21.3" height="22.1" fill="#b0acac"/><rect x="20.7" y="43.0" width="21.3" height="22.1" fill="#c8c8cc"/><rect x="41.3" y="43.0" width="21.3" height="22.1" fill="#c8c8cc"/><rect x="62.0" y="43.0" width="21.3" height="22.1" fill="#b0acac"/><rect x="82.7" y="43.0" width="21.3" height="22.1" fill="#8a8488"/><rect x="103.3" y="43.0" width="21.3" height="22.1" fill="#7a767a"/><rect x="0.0" y="64.5" width="21.3" height="22.1" fill="#4a4a4c"/><rect x="20.7" y="64.5" width="21.3" height="22.1" fill="#4a4a4c"/><rect x="41.3" y="64.5" width="21.3" height="22.1" fill="#4a4a4c"/><rect x="62.0" y="64.5" width="21.3" height="22.1" fill="#8a8688"/><rect x="82.7" y="64.5" width="21.3" height="22.1" fill="#6a6668"/><rect x="103.3" y="64.5" width="21.3" height="22.1" fill="#5a5658"/></g><g filter="url(#pb2)" transform="translate(-947,-1215)"><rect x="946" y="1215" width="126" height="60" fill="#a89aa8" opacity="0.5"/><rect x="1027" y="1215" width="7" height="70" fill="#d0c8cc"/><ellipse cx="1055" cy="1242" rx="16" ry="10" fill="#a8a080" opacity="0.8"/><rect x="1049" y="1250" width="3" height="38" fill="#3a3436"/><rect x="1066" y="1250" width="3" height="38" fill="#3a3436"/><path d="M1000 1262 L1030 1262 L1032 1286 L1000 1286Z" fill="#c8c4c8"/><rect x="946" y="1286" width="126" height="16" fill="#4a4a4e"/></g></svg></div>
<div class="a" style="left:1042px;top:1286px;width:30px;height:16px;background:#000"><div style="position:absolute;left:1px;top:1px;width:28px;height:14px;background:#c8c8c8"></div><div style="position:absolute;left:2px;top:2px;width:13px;height:12px;background:#000"></div><div style="position:absolute;left:16px;top:2px;width:12px;height:12px;background:#000"></div><div style="position:absolute;left:4px;top:5px;width:9px;height:6px;border:1px dotted #fff"></div><div style="position:absolute;left:18px;top:3px;width:9px;height:9px;background:linear-gradient(135deg,transparent 50%,#ccc 50%)"></div><div style="position:absolute;left:17px;top:5px;width:5px;height:1px;background:#fff"></div><div style="position:absolute;left:19px;top:3px;width:1px;height:5px;background:#fff"></div></div>
<div class="num" style="left:1090px;top:1171.0px">418</div>
<div class="a" style="left:1228px;top:1181px;width:17px;height:13px;border:1px dotted #2a2a2a"><div style="position:absolute;left:7px;top:2px;width:1px;height:5px;background:#111"></div><div style="position:absolute;left:7px;top:8px;width:1px;height:1px;background:#111"></div></div>
<div class="ph" style="left:1106px;top:1214px;width:126px;height:88px"><svg width="124" height="86" style="display:block"><g filter="url(#pb)"><rect x="0.0" y="0.0" width="21.3" height="22.1" fill="#a898a8"/><rect x="20.7" y="0.0" width="21.3" height="22.1" fill="#b0a0b4"/><rect x="41.3" y="0.0" width="21.3" height="22.1" fill="#b8acb8"/><rect x="62.0" y="0.0" width="21.3" height="22.1" fill="#b8acb8"/><rect x="82.7" y="0.0" width="21.3" height="22.1" fill="#a898a8"/><rect x="103.3" y="0.0" width="21.3" height="22.1" fill="#9a909a"/><rect x="0.0" y="21.5" width="21.3" height="22.1" fill="#a09880"/><rect x="20.7" y="21.5" width="21.3" height="22.1" fill="#a89888"/><rect x="41.3" y="21.5" width="21.3" height="22.1" fill="#b8a0a8"/><rect x="62.0" y="21.5" width="21.3" height="22.1" fill="#b0a0a4"/><rect x="82.7" y="21.5" width="21.3" height="22.1" fill="#b8acac"/><rect x="103.3" y="21.5" width="21.3" height="22.1" fill="#a8a088"/><rect x="0.0" y="43.0" width="21.3" height="22.1" fill="#7a7470"/><rect x="20.7" y="43.0" width="21.3" height="22.1" fill="#8a8488"/><rect x="41.3" y="43.0" width="21.3" height="22.1" fill="#c0bcbc"/><rect x="62.0" y="43.0" width="21.3" height="22.1" fill="#c0bcbc"/><rect x="82.7" y="43.0" width="21.3" height="22.1" fill="#a8a4a4"/><rect x="103.3" y="43.0" width="21.3" height="22.1" fill="#7a767a"/><rect x="0.0" y="64.5" width="21.3" height="22.1" fill="#5a5658"/><rect x="20.7" y="64.5" width="21.3" height="22.1" fill="#6a6868"/><rect x="41.3" y="64.5" width="21.3" height="22.1" fill="#b8b8bc"/><rect x="62.0" y="64.5" width="21.3" height="22.1" fill="#c0c0c4"/><rect x="82.7" y="64.5" width="21.3" height="22.1" fill="#7a7878"/><rect x="103.3" y="64.5" width="21.3" height="22.1" fill="#4a4a4c"/></g><g filter="url(#pb2)"><rect x="0" y="0" width="124" height="40" fill="#a898a8" opacity="0.5"/><path d="M36 30 A26 26 0 0 1 88 30" fill="none" stroke="#d8d0d8" stroke-width="4"/><rect x="33" y="22" width="7" height="48" fill="#d0c8cc"/><rect x="86" y="22" width="7" height="48" fill="#d0c8cc"/><ellipse cx="60" cy="24" rx="22" ry="9" fill="#c8a8b8"/><ellipse cx="15" cy="30" rx="16" ry="10" fill="#a89878"/><ellipse cx="108" cy="32" rx="16" ry="10" fill="#a8a080"/><rect x="2" y="40" width="4" height="30" fill="#3a3436"/><rect x="18" y="40" width="4" height="30" fill="#3a3436"/><rect x="101" y="40" width="4" height="30" fill="#3a3436"/><rect x="118" y="40" width="4" height="30" fill="#3a3436"/><path d="M35 44 L86 46 L86 62 L35 62Z" fill="#c8c4c8"/><rect x="0" y="70" width="124" height="16" fill="#4a4a4e"/><path d="M38 60 L62 57 L76 62 L76 77 L36 77Z" fill="#d8dce0"/><rect x="38" y="77" width="38" height="9" fill="#8a8a90" opacity="0.8"/><ellipse cx="56" cy="43" rx="3.5" ry="3.5" fill="#262024"/><ellipse cx="60" cy="55" rx="6" ry="4" fill="#3a2a3a"/></g></svg></div>
<div class="num" style="left:1250px;top:1171.0px">419</div>
<div class="ph" style="left:1285px;top:1195px;width:88px;height:126px"><svg width="86" height="124" style="display:block"><g filter="url(#pb)"><rect x="0.0" y="0.0" width="86.6" height="21.3" fill="#8a7a8a"/><rect x="0.0" y="20.7" width="86.6" height="21.3" fill="#a0909a"/><rect x="0.0" y="41.3" width="86.6" height="21.3" fill="#b0a4a4"/><rect x="0.0" y="62.0" width="86.6" height="21.3" fill="#9a9498"/><rect x="0.0" y="82.7" width="86.6" height="21.3" fill="#8a8488"/><rect x="0.0" y="103.3" width="86.6" height="21.3" fill="#5a5658"/></g><g filter="url(#pb2)" transform="translate(-1286,-1196)"><rect x="1286" y="1196" width="12" height="121" fill="#8a7a8a"/><rect x="1290" y="1225" width="8" height="60" fill="#c8c0c4"/><ellipse cx="1290" cy="1215" rx="5" ry="4" fill="#f0e8d8"/><rect x="1286" y="1290" width="12" height="27" fill="#4a4a4e"/></g></svg></div>
<div class="a" style="left:1343px;top:1305px;width:30px;height:16px;background:#000"><div style="position:absolute;left:1px;top:1px;width:28px;height:14px;background:#c8c8c8"></div><div style="position:absolute;left:2px;top:2px;width:13px;height:12px;background:#000"></div><div style="position:absolute;left:16px;top:2px;width:12px;height:12px;background:#000"></div><div style="position:absolute;left:4px;top:5px;width:9px;height:6px;border:1px dotted #fff"></div><div style="position:absolute;left:18px;top:3px;width:9px;height:9px;background:linear-gradient(135deg,transparent 50%,#ccc 50%)"></div><div style="position:absolute;left:17px;top:5px;width:5px;height:1px;background:#fff"></div><div style="position:absolute;left:19px;top:3px;width:1px;height:5px;background:#fff"></div></div>
<div class="a" style="left:128px;top:85px;width:1px;height:1232px;background:#333"></div>
<div class="a" style="left:129px;top:85px;width:1px;height:1232px;background:#8e8e8e"></div>
<div class="a" style="left:288px;top:85px;width:1px;height:1232px;background:#333"></div>
<div class="a" style="left:289px;top:85px;width:1px;height:1232px;background:#8e8e8e"></div>
<div class="a" style="left:448px;top:85px;width:1px;height:1232px;background:#333"></div>
<div class="a" style="left:449px;top:85px;width:1px;height:1232px;background:#8e8e8e"></div>
<div class="a" style="left:608px;top:85px;width:1px;height:1232px;background:#333"></div>
<div class="a" style="left:609px;top:85px;width:1px;height:1232px;background:#8e8e8e"></div>
<div class="a" style="left:768px;top:85px;width:1px;height:1232px;background:#333"></div>
<div class="a" style="left:769px;top:85px;width:1px;height:1232px;background:#8e8e8e"></div>
<div class="a" style="left:928px;top:85px;width:1px;height:1232px;background:#333"></div>
<div class="a" style="left:929px;top:85px;width:1px;height:1232px;background:#8e8e8e"></div>
<div class="a" style="left:1088px;top:85px;width:1px;height:1232px;background:#333"></div>
<div class="a" style="left:1089px;top:85px;width:1px;height:1232px;background:#8e8e8e"></div>
<div class="a" style="left:1248px;top:85px;width:1px;height:1232px;background:#333"></div>
<div class="a" style="left:1249px;top:85px;width:1px;height:1232px;background:#8e8e8e"></div>
<div class="a" style="left:0px;top:210px;width:1297px;height:2px;background:#333"></div>
<div class="a" style="left:0px;top:212px;width:1297px;height:1px;background:#8e8e8e"></div>
<div class="a" style="left:0px;top:371px;width:1297px;height:2px;background:#333"></div>
<div class="a" style="left:0px;top:373px;width:1297px;height:1px;background:#8e8e8e"></div>
<div class="a" style="left:0px;top:532px;width:1297px;height:2px;background:#333"></div>
<div class="a" style="left:0px;top:534px;width:1297px;height:1px;background:#8e8e8e"></div>
<div class="a" style="left:0px;top:693px;width:1297px;height:2px;background:#333"></div>
<div class="a" style="left:0px;top:695px;width:1297px;height:1px;background:#8e8e8e"></div>
<div class="a" style="left:0px;top:854px;width:1297px;height:2px;background:#333"></div>
<div class="a" style="left:0px;top:856px;width:1297px;height:1px;background:#8e8e8e"></div>
<div class="a" style="left:0px;top:1015px;width:1297px;height:2px;background:#333"></div>
<div class="a" style="left:0px;top:1017px;width:1297px;height:1px;background:#8e8e8e"></div>
<div class="a" style="left:0px;top:1176px;width:1297px;height:2px;background:#333"></div>
<div class="a" style="left:0px;top:1178px;width:1297px;height:1px;background:#8e8e8e"></div>
<div class="a" style="left:0px;top:1317px;width:1297px;height:1px;background:#111"></div>
<div class="a" style="left:0px;top:1318px;width:1297px;height:27px;background:#434343"></div>
<div class="a" style="left:0px;top:0px;width:1297px;height:15px;background:#eaeaea"></div>
<div class="a" style="left:0px;top:15px;width:1297px;height:1px;background:#dcdcdc"></div>
<div class="a" style="left:0px;top:16px;width:1297px;height:25px;background:#f3f4f6"></div>
<div class="a" style="left:0px;top:40px;width:1297px;height:1px;background:#fbfbfb"></div>
<div class="a" style="left:0px;top:41px;width:1297px;height:15px;background:#000"></div>
<div class="a" style="left:584px;top:46px;width:1px;height:1px;background:#c0c0c0"></div>
<div class="a" style="left:586px;top:46px;width:1px;height:1px;background:#c0c0c0"></div>
<div class="a" style="left:588px;top:46px;width:1px;height:1px;background:#c0c0c0"></div>
<div class="a" style="left:590px;top:46px;width:1px;height:1px;background:#c0c0c0"></div>
<div class="a" style="left:592px;top:46px;width:1px;height:1px;background:#c0c0c0"></div>
<div class="a" style="left:594px;top:46px;width:1px;height:1px;background:#c0c0c0"></div>
<div class="a" style="left:596px;top:46px;width:1px;height:1px;background:#c0c0c0"></div>
<div class="a" style="left:586px;top:48px;width:1px;height:1px;background:#c0c0c0"></div>
<div class="a" style="left:588px;top:48px;width:1px;height:1px;background:#c0c0c0"></div>
<div class="a" style="left:590px;top:48px;width:1px;height:1px;background:#c0c0c0"></div>
<div class="a" style="left:592px;top:48px;width:1px;height:1px;background:#c0c0c0"></div>
<div class="a" style="left:594px;top:48px;width:1px;height:1px;background:#c0c0c0"></div>
<div class="a" style="left:588px;top:50px;width:1px;height:1px;background:#c0c0c0"></div>
<div class="a" style="left:590px;top:50px;width:1px;height:1px;background:#c0c0c0"></div>
<div class="a" style="left:592px;top:50px;width:1px;height:1px;background:#c0c0c0"></div>
<div class="a" style="left:590px;top:52px;width:1px;height:1px;background:#c0c0c0"></div>
<div class="a" style="left:332px;top:64px;width:1px;height:1px;background:#111"></div>
<div class="a" style="left:376px;top:64px;width:1px;height:1px;background:#111"></div>
<div class="a" style="left:446px;top:64px;width:1px;height:1px;background:#111"></div>
<div class="a" style="left:516px;top:64px;width:1px;height:1px;background:#111"></div>
<div class="a" style="left:566px;top:64px;width:1px;height:1px;background:#111"></div>
<div class="a" style="left:0px;top:56px;width:1297px;height:2px;background:#2e2e2e"></div>
<div class="a" style="left:0px;top:58px;width:1297px;height:26px;background:#575757"></div>
<div class="a" style="left:0px;top:84px;width:1297px;height:1px;background:#000"></div>
<div class="a" style="left:0px;top:85px;width:1297px;height:1px;background:#7a7a7a"></div>
<div class="a" style="left:0px;top:86px;width:1297px;height:3px;background:#5a5a5a"></div>
<div class="a" style="left:0px;top:89px;width:1297px;height:1px;background:#000"></div>
<div class="a t" style="top:-7.08px;font-size:19px;line-height:19px;color:#2a2a2a;left:380px;direction:ltr">2019 ינואר - Adobe Photoshop Lightroom - Library</div>
<div class="a" style="left:158px;top:67px;width:867px;height:1209px;background:#b5a596;box-shadow:0 0 0 0.5px rgba(80,70,60,.35)"></div>
<div class="a" style="left:165px;top:104px;width:852px;height:1165px;background:#f0f0f0;border:1px solid #9c8d7f"></div>
<div class="a" style="left:976px;top:68px;width:41px;height:26px;background:#c94a4a"><svg width="41" height="26" style="position:absolute;left:0;top:0"><path d="M15.5 8 L25.5 18 M25.5 8 L15.5 18" stroke="#fff" stroke-width="2.2"/></svg></div>
<div class="a t" style="top:77.76px;font-size:18px;line-height:18px;color:#333;left:291px;width:600px;text-align:center;">Export One File</div>
<div class="a t" style="top:130.50px;font-size:13px;line-height:13px;color:#111;right:911.5px;">Export To:</div>
<div class="dd" style="left:396px;top:125px;width:190px;height:24px"><svg width="12" height="9" style="position:absolute;right:4px;top:7.0px"><path d="M1.2 1.5 L6 6.5 L10.8 1.5" fill="none" stroke="#444" stroke-width="1.8"/></svg></div>
<div class="a t" style="top:131.92px;font-size:12.5px;line-height:12.5px;color:#000;left:400.5px;">Hard Drive</div>
<div class="a t" style="top:162.11px;font-size:10.5px;line-height:10.5px;color:#8e8e8e;left:186px;">Preset:</div>
<div class="a t" style="top:162.11px;font-size:10.5px;line-height:10.5px;color:#8e8e8e;left:396px;">Export One File</div>
<div class="a" style="left:186px;top:179px;width:200px;height:1001px;background:#fff;border:1px solid #828282"></div>
<div class="a" style="left:369px;top:180px;width:16px;height:999px;background:#f0f0f0"></div>
<svg class="a" width="12" height="8" style="left:371px;top:188px"><path d="M1.5 6 L6 1.5 L10.5 6" fill="none" stroke="#c0c0c0" stroke-width="1.2"/></svg>
<svg class="a" width="12" height="8" style="left:371px;top:1164px"><path d="M1.5 1.5 L6 6 L10.5 1.5" fill="none" stroke="#c0c0c0" stroke-width="1.2"/></svg>
<svg class="a" width="10" height="12" style="left:197px;top:188px"><path d="M0.5 0.5 L8.5 5 L0.5 9.5 Z" fill="#555"/></svg>
<div class="a t" style="top:187.25px;font-size:12.7px;line-height:12.7px;color:#111;left:213px;">Lightroom Presets</div>
<svg class="a" width="10" height="12" style="left:197px;top:210px"><path d="M0.5 0.5 L8.5 5 L0.5 9.5 Z" fill="#555"/></svg>
<div class="a t" style="top:209.25px;font-size:12.7px;line-height:12.7px;color:#111;left:213px;">Google</div>
<svg class="a" width="10" height="12" style="left:197px;top:232px"><path d="M0.5 0.5 L8.5 5 L0.5 9.5 Z" fill="#555"/></svg>
<div class="a t" style="top:231.25px;font-size:12.7px;line-height:12.7px;color:#111;left:213px;">User Presets</div>
<div class="a" style="left:187px;top:1182px;width:98px;height:20px;border:1px solid #adadad;background:linear-gradient(#f3f3f3,#e4e4e4)"></div>
<div class="a t" style="top:1187.27px;font-size:11.5px;line-height:11.5px;color:#111;left:-64px;width:600px;text-align:center;">Add</div>
<div class="a" style="left:288px;top:1182px;width:97px;height:20px;border:1px solid #d9d9d9;background:#efefef"></div>
<div class="a t" style="top:1187.27px;font-size:11.5px;line-height:11.5px;color:#8a8a8a;left:36px;width:600px;text-align:center;">Remove</div>
<div class="a" style="left:187px;top:1224px;width:124px;height:23px;border:1px solid #adadad;background:linear-gradient(#f3f3f3,#e4e4e4)"></div>
<div class="a t" style="top:1230.42px;font-size:12.5px;line-height:12.5px;color:#111;left:-51px;width:600px;text-align:center;">Plug-in Manager...</div>
<div class="a" style="left:827px;top:1224px;width:78px;height:23px;border:1px solid #3c7fb1;background:linear-gradient(#f3f3f3,#e4e4e4);box-shadow:inset 0 0 0 1px #d8e6f2"></div>
<div class="a t" style="top:1230.42px;font-size:12.5px;line-height:12.5px;color:#111;left:566px;width:600px;text-align:center;">Export</div>
<div class="a" style="left:918px;top:1224px;width:77px;height:23px;border:1px solid #adadad;background:linear-gradient(#f3f3f3,#e4e4e4)"></div>
<div class="a t" style="top:1230.42px;font-size:12.5px;line-height:12.5px;color:#111;left:656px;width:600px;text-align:center;">Cancel</div>
<div class="a" style="left:396px;top:179px;width:599px;height:1024px;background:#f7f7f7;border:1px solid #828282"></div>
<div class="a" style="left:978px;top:180px;width:16px;height:1022px;background:#f0f0f0"></div>
<svg class="a" width="12" height="8" style="left:980px;top:188px"><path d="M1.5 6 L6 1.5 L10.5 6" fill="none" stroke="#c0c0c0" stroke-width="1.2"/></svg>
<svg class="a" width="12" height="8" style="left:980px;top:1186px"><path d="M1.5 1.5 L6 6 L10.5 1.5" fill="none" stroke="#c0c0c0" stroke-width="1.2"/></svg>
<div class="hd" style="top:182px"></div>
<svg class="a" width="12" height="10" style="left:407px;top:190px"><path d="M0.5 0.5 L10.5 0.5 L5.5 8.5 Z" fill="#737373"/></svg>
<div class="a t" style="top:189.27px;font-size:11.5px;line-height:11.5px;color:#111;font-weight:700;left:424px;">Export Location</div>
<div class="a t" style="top:221.69px;font-size:11px;line-height:11px;color:#111;letter-spacing:-0.15px;right:780.5px;">Export To:</div>
<div class="dd" style="left:523px;top:216px;width:429px;height:21px"><svg width="12" height="9" style="position:absolute;right:4px;top:5.5px"><path d="M1.2 1.5 L6 6.5 L10.8 1.5" fill="none" stroke="#444" stroke-width="1.8"/></svg></div>
<div class="a t" style="top:221.65px;font-size:11px;line-height:11px;color:#000;letter-spacing:-0.15px;left:527px;">Same folder as original photo</div>
<div class="a t" style="top:251.69px;font-size:11px;line-height:11px;color:#8e8e8e;letter-spacing:-0.15px;right:780.5px;">Folder:</div>
<div class="a t" style="top:251.69px;font-size:11px;line-height:11px;color:#8e8e8e;letter-spacing:-0.15px;left:522px;">(wherever each source photo is located)</div>
<div class="cb" style="left:523px;top:276px"><svg width="14" height="14" style="position:absolute;left:0;top:0"><path d="M2.5 6.8 L5.5 10.3 L11.5 2.8" fill="none" stroke="#111" stroke-width="2.6"/></svg></div>
<div class="a t" style="top:277.69px;font-size:11px;line-height:11px;color:#111;letter-spacing:-0.15px;left:541px;">Put in Subfolder:</div>
<div class="a" style="left:644px;top:276px;width:308px;height:19px;background:#fff;border:1px solid #7eb4ea"></div>
<div class="a t" style="top:278.84px;font-size:12px;line-height:12px;color:#111;left:649px;">ערוך</div>
<div class="cb" style="left:523px;top:303px"><svg width="14" height="14" style="position:absolute;left:0;top:0"><path d="M2.5 6.8 L5.5 10.3 L11.5 2.8" fill="none" stroke="#111" stroke-width="2.6"/></svg></div>
<div class="a t" style="top:304.69px;font-size:11px;line-height:11px;color:#111;letter-spacing:-0.15px;left:541px;">Add to This Catalog</div>
<div class="cb dis" style="left:695px;top:303px"></div>
<div class="a t" style="top:304.69px;font-size:11px;line-height:11px;color:#8e8e8e;letter-spacing:-0.15px;left:713px;">Add to Stack:</div>
<div class="dd dis" style="left:797px;top:301px;width:95px;height:21px"><svg width="12" height="9" style="position:absolute;right:4px;top:5.5px"><path d="M1.2 1.5 L6 6.5 L10.8 1.5" fill="none" stroke="#b8b8b8" stroke-width="1.2"/></svg></div>
<div class="a t" style="top:306.65px;font-size:11px;line-height:11px;color:#6e6e6e;letter-spacing:-0.15px;left:801px;">Below Original</div>
<div class="a t" style="top:338.69px;font-size:11px;line-height:11px;color:#111;letter-spacing:-0.15px;right:780.5px;">Existing Files:</div>
<div class="dd" style="left:523px;top:333px;width:222px;height:21px"><svg width="12" height="9" style="position:absolute;right:4px;top:5.5px"><path d="M1.2 1.5 L6 6.5 L10.8 1.5" fill="none" stroke="#444" stroke-width="1.8"/></svg></div>
<div class="a t" style="top:338.65px;font-size:11px;line-height:11px;color:#000;letter-spacing:-0.15px;left:527px;">Ask what to do</div>
<div class="hd" style="top:366px"></div>
<svg class="a" width="12" height="10" style="left:407px;top:374px"><path d="M0.5 0.5 L10.5 0.5 L5.5 8.5 Z" fill="#3a3a3a"/></svg>
<div class="a t" style="top:373.27px;font-size:11.5px;line-height:11.5px;color:#111;font-weight:700;left:424px;">File Naming</div>
<div class="cb" style="left:423px;top:402px"><svg width="14" height="14" style="position:absolute;left:0;top:0"><path d="M2.5 6.8 L5.5 10.3 L11.5 2.8" fill="none" stroke="#111" stroke-width="2.6"/></svg></div>
<div class="a t" style="top:403.69px;font-size:11px;line-height:11px;color:#111;letter-spacing:-0.15px;left:441px;">Rename To:</div>
<div class="dd" style="left:523px;top:400px;width:429px;height:21px"><svg width="12" height="9" style="position:absolute;right:4px;top:5.5px"><path d="M1.2 1.5 L6 6.5 L10.8 1.5" fill="none" stroke="#444" stroke-width="1.8"/></svg></div>
<div class="a t" style="top:405.65px;font-size:11px;line-height:11px;color:#000;letter-spacing:-0.15px;left:527px;">Filename</div>
<div class="a t" style="top:435.69px;font-size:11px;line-height:11px;color:#8e8e8e;letter-spacing:-0.15px;right:780.5px;">Custom Text:</div>
<div class="a t" style="top:435.69px;font-size:11px;line-height:11px;color:#8e8e8e;letter-spacing:-0.15px;right:427px;">Start Number:</div>
<div class="a t" style="top:466.69px;font-size:11px;line-height:11px;color:#111;letter-spacing:-0.15px;right:780.5px;">Example:</div>
<div class="a t" style="top:466.69px;font-size:11px;line-height:11px;color:#111;letter-spacing:-0.15px;left:522px;">A (1).jpg</div>
<div class="a t" style="top:466.69px;font-size:11px;line-height:11px;color:#111;letter-spacing:-0.15px;right:427px;">Extensions:</div>
<div class="dd" style="left:876px;top:461px;width:76px;height:21px"><svg width="12" height="9" style="position:absolute;right:4px;top:5.5px"><path d="M1.2 1.5 L6 6.5 L10.8 1.5" fill="none" stroke="#444" stroke-width="1.8"/></svg></div>
<div class="a" style="left:879px;top:463px;width:52px;height:17px;overflow:hidden"><div class="t" style="font-size:11px;line-height:17px;color:#111">Lowercase</div></div>
<div class="hd" style="top:494px"></div>
<svg class="a" width="12" height="10" style="left:407px;top:502px"><path d="M0.5 0.5 L10.5 0.5 L5.5 8.5 Z" fill="#3a3a3a"/></svg>
<div class="a t" style="top:501.27px;font-size:11.5px;line-height:11.5px;color:#111;font-weight:700;left:424px;">Video</div>
<div class="cb dis" style="left:523px;top:535px"></div>
<div class="a t" style="top:536.69px;font-size:11px;line-height:11px;color:#8e8e8e;letter-spacing:-0.15px;left:541px;">Include Video Files:</div>
<div class="a t" style="top:570.69px;font-size:11px;line-height:11px;color:#8e8e8e;letter-spacing:-0.15px;right:780.5px;">Video Format:</div>
<div class="dd dis" style="left:523px;top:565px;width:145px;height:21px"><svg width="12" height="9" style="position:absolute;right:4px;top:5.5px"><path d="M1.2 1.5 L6 6.5 L10.8 1.5" fill="none" stroke="#b8b8b8" stroke-width="1.2"/></svg></div>
<div class="a t" style="top:602.69px;font-size:11px;line-height:11px;color:#8e8e8e;letter-spacing:-0.15px;right:780.5px;">Quality:</div>
<div class="dd dis" style="left:523px;top:597px;width:145px;height:21px"><svg width="12" height="9" style="position:absolute;right:4px;top:5.5px"><path d="M1.2 1.5 L6 6.5 L10.8 1.5" fill="none" stroke="#b8b8b8" stroke-width="1.2"/></svg></div>
<div class="hd" style="top:654px"></div>
<svg class="a" width="12" height="10" style="left:407px;top:662px"><path d="M0.5 0.5 L10.5 0.5 L5.5 8.5 Z" fill="#737373"/></svg>
<div class="a t" style="top:661.27px;font-size:11.5px;line-height:11.5px;color:#111;font-weight:700;left:424px;">File Settings</div>
<div class="a t" style="top:693.69px;font-size:11px;line-height:11px;color:#111;letter-spacing:-0.15px;right:780.5px;">Image Format:</div>
<div class="dd" style="left:523px;top:688px;width:160px;height:21px"><svg width="12" height="9" style="position:absolute;right:4px;top:5.5px"><path d="M1.2 1.5 L6 6.5 L10.8 1.5" fill="none" stroke="#444" stroke-width="1.8"/></svg></div>
<div class="a t" style="top:693.65px;font-size:11px;line-height:11px;color:#000;letter-spacing:-0.15px;left:527px;">JPEG</div>
<div class="a t" style="top:693.69px;font-size:11px;line-height:11px;color:#111;letter-spacing:-0.15px;left:707px;">Quality:</div>
<div class="a" style="left:766px;top:695px;width:85px;height:5px;background:#e2e2e2;border:1px solid #d4d4d4;border-radius:2px"></div>
<svg class="a" width="12" height="14" style="left:840px;top:690px"><path d="M1 1 L10 1 L10 9 L5.5 13 L1 9 Z" fill="#e6e6e6" stroke="#c6c6c6"/></svg>
<div class="a" style="left:771px;top:710px;width:1px;height:2px;background:#c8c8c8"></div>
<div class="a" style="left:845px;top:710px;width:1px;height:2px;background:#c8c8c8"></div>
<div class="a" style="left:864px;top:690px;width:47px;height:19px;background:#fff;border:1px solid #abadb3"></div>
<div class="a t" style="top:693.69px;font-size:11px;line-height:11px;color:#111;letter-spacing:-0.15px;right:391px;">100</div>
<div class="a t" style="top:728.69px;font-size:11px;line-height:11px;color:#111;letter-spacing:-0.15px;right:780.5px;">Color Space:</div>
<div class="dd" style="left:523px;top:723px;width:160px;height:21px"><svg width="12" height="9" style="position:absolute;right:4px;top:5.5px"><path d="M1.2 1.5 L6 6.5 L10.8 1.5" fill="none" stroke="#444" stroke-width="1.8"/></svg></div>
<div class="a t" style="top:728.65px;font-size:11px;line-height:11px;color:#000;letter-spacing:-0.15px;left:527px;">sRGB</div>
<div class="cb" style="left:708px;top:725px"></div>
<div class="a t" style="top:726.69px;font-size:11px;line-height:11px;color:#111;letter-spacing:-0.15px;left:726px;">Limit File Size To:</div>
<div class="a" style="left:831px;top:725px;width:47px;height:19px;background:#fff;border:1px solid #d9d9d9"></div>
<div class="a t" style="top:728.69px;font-size:11px;line-height:11px;color:#9a9a9a;letter-spacing:-0.15px;left:836px;">100</div>
<div class="a t" style="top:728.69px;font-size:11px;line-height:11px;color:#111;letter-spacing:-0.15px;left:880px;">K</div>
<div class="hd" style="top:783px"></div>
<svg class="a" width="12" height="10" style="left:407px;top:791px"><path d="M0.5 0.5 L10.5 0.5 L5.5 8.5 Z" fill="#3a3a3a"/></svg>
<div class="a t" style="top:790.27px;font-size:11.5px;line-height:11.5px;color:#111;font-weight:700;left:424px;">Image Sizing</div>
<div class="cb" style="left:423px;top:820px"><svg width="14" height="14" style="position:absolute;left:0;top:0"><path d="M2.5 6.8 L5.5 10.3 L11.5 2.8" fill="none" stroke="#111" stroke-width="2.6"/></svg></div>
<div class="a t" style="top:821.69px;font-size:11px;line-height:11px;color:#111;letter-spacing:-0.15px;left:441px;">Resize to Fit:</div>
<div class="dd" style="left:523px;top:817px;width:187px;height:21px"><svg width="12" height="9" style="position:absolute;right:4px;top:5.5px"><path d="M1.2 1.5 L6 6.5 L10.8 1.5" fill="none" stroke="#444" stroke-width="1.8"/></svg></div>
<div class="a t" style="top:822.65px;font-size:11px;line-height:11px;color:#000;letter-spacing:-0.15px;left:527px;">Long Edge</div>
<div class="cb" style="left:725px;top:820px"></div>
<div class="a t" style="top:821.69px;font-size:11px;line-height:11px;color:#111;letter-spacing:-0.15px;left:743px;">Don’t Enlarge</div>
<div class="a" style="left:598px;top:851px;width:47px;height:19px;background:#fff;border:1px solid #7eb4ea"></div>
<div class="a t" style="top:854.69px;font-size:11px;line-height:11px;color:#111;letter-spacing:-0.15px;left:602px;">4500</div>
<div class="dd" style="left:650px;top:849px;width:60px;height:21px"><svg width="12" height="9" style="position:absolute;right:4px;top:5.5px"><path d="M1.2 1.5 L6 6.5 L10.8 1.5" fill="none" stroke="#444" stroke-width="1.8"/></svg></div>
<div class="a t" style="top:854.65px;font-size:11px;line-height:11px;color:#000;letter-spacing:-0.15px;left:654px;">pixels</div>
<div class="a t" style="top:854.69px;font-size:11px;line-height:11px;color:#111;letter-spacing:-0.15px;right:512px;">Resolution:</div>
<div class="a" style="left:791px;top:851px;width:47px;height:19px;background:#fff;border:1px solid #abadb3"></div>
<div class="a t" style="top:854.69px;font-size:11px;line-height:11px;color:#111;letter-spacing:-0.15px;left:795px;">300</div>
<div class="dd" style="left:843px;top:849px;width:109px;height:21px"><svg width="12" height="9" style="position:absolute;right:4px;top:5.5px"><path d="M1.2 1.5 L6 6.5 L10.8 1.5" fill="none" stroke="#444" stroke-width="1.8"/></svg></div>
<div class="a t" style="top:854.65px;font-size:11px;line-height:11px;color:#000;letter-spacing:-0.15px;left:847px;">pixels per inch</div>
<div class="hd" style="top:882px"></div>
<svg class="a" width="12" height="10" style="left:407px;top:890px"><path d="M0.5 0.5 L10.5 0.5 L5.5 8.5 Z" fill="#737373"/></svg>
<div class="a t" style="top:889.27px;font-size:11.5px;line-height:11.5px;color:#111;font-weight:700;left:424px;">Output Sharpening</div>
<div class="cb" style="left:423px;top:919px"></div>
<div class="a t" style="top:921.69px;font-size:11px;line-height:11px;color:#111;letter-spacing:-0.15px;left:441px;">Sharpen For:</div>
<div class="dd dis" style="left:523px;top:916px;width:153px;height:21px"><svg width="12" height="9" style="position:absolute;right:4px;top:5.5px"><path d="M1.2 1.5 L6 6.5 L10.8 1.5" fill="none" stroke="#b8b8b8" stroke-width="1.2"/></svg></div>
<div class="a t" style="top:921.65px;font-size:11px;line-height:11px;color:#8a8a8a;letter-spacing:-0.15px;left:527px;">Screen</div>
<div class="a t" style="top:921.69px;font-size:11px;line-height:11px;color:#8e8e8e;letter-spacing:-0.15px;right:550px;">Amount:</div>
<div class="dd dis" style="left:753px;top:916px;width:145px;height:21px"><svg width="12" height="9" style="position:absolute;right:4px;top:5.5px"><path d="M1.2 1.5 L6 6.5 L10.8 1.5" fill="none" stroke="#b8b8b8" stroke-width="1.2"/></svg></div>
<div class="a t" style="top:921.65px;font-size:11px;line-height:11px;color:#8a8a8a;letter-spacing:-0.15px;left:757px;">Standard</div>
<div class="hd" style="top:949px"></div>
<svg class="a" width="12" height="10" style="left:407px;top:957px"><path d="M0.5 0.5 L10.5 0.5 L5.5 8.5 Z" fill="#737373"/></svg>
<div class="a t" style="top:956.27px;font-size:11.5px;line-height:11.5px;color:#111;font-weight:700;left:424px;">Metadata</div>
<div class="a t" style="top:988.69px;font-size:11px;line-height:11px;color:#111;letter-spacing:-0.15px;right:780.5px;">Include:</div>
<div class="dd" style="left:523px;top:983px;width:212px;height:21px"><svg width="12" height="9" style="position:absolute;right:4px;top:5.5px"><path d="M1.2 1.5 L6 6.5 L10.8 1.5" fill="none" stroke="#444" stroke-width="1.8"/></svg></div>
<div class="a t" style="top:988.65px;font-size:11px;line-height:11px;color:#000;letter-spacing:-0.15px;left:527px;">All Metadata</div>
<div class="cb" style="left:523px;top:1014px"><svg width="14" height="14" style="position:absolute;left:0;top:0"><path d="M2.5 6.8 L5.5 10.3 L11.5 2.8" fill="none" stroke="#111" stroke-width="2.6"/></svg></div>
<div class="a t" style="top:1016.69px;font-size:11px;line-height:11px;color:#111;letter-spacing:-0.15px;left:541px;">Remove Location Info</div>
<div class="cb" style="left:523px;top:1040px"></div>
<div class="a t" style="top:1041.69px;font-size:11px;line-height:11px;color:#111;letter-spacing:-0.15px;left:541px;">Write Keywords as Lightroom Hierarchy</div>
<div class="hd" style="top:1066px"></div>
<svg class="a" width="12" height="10" style="left:407px;top:1074px"><path d="M0.5 0.5 L10.5 0.5 L5.5 8.5 Z" fill="#737373"/></svg>
<div class="a t" style="top:1073.27px;font-size:11.5px;line-height:11.5px;color:#111;font-weight:700;left:424px;">Watermarking</div>
<div class="cb" style="left:423px;top:1102px"></div>
<div class="a t" style="top:1103.69px;font-size:11px;line-height:11px;color:#111;letter-spacing:-0.15px;left:441px;">Watermark:</div>
<div class="dd dis" style="left:523px;top:1100px;width:185px;height:21px"><svg width="12" height="9" style="position:absolute;right:4px;top:5.5px"><path d="M1.2 1.5 L6 6.5 L10.8 1.5" fill="none" stroke="#b8b8b8" stroke-width="1.2"/></svg></div>
<div class="a t" style="top:1105.65px;font-size:11px;line-height:11px;color:#8a8a8a;letter-spacing:-0.15px;left:527px;">לוגו</div>
<div class="hd" style="top:1133px"></div>
<svg class="a" width="10" height="12" style="left:409px;top:1139px"><path d="M0.5 0.5 L8.5 5.5 L0.5 10.5 Z" fill="#737373"/></svg>
<div class="a t" style="top:1140.27px;font-size:11.5px;line-height:11.5px;color:#111;font-weight:700;left:424px;">Post-Processing</div>
<div class="a t" style="top:1139.69px;font-size:11px;line-height:11px;color:#111;letter-spacing:-0.15px;right:337px;">Do nothing</div>
</body></html>
